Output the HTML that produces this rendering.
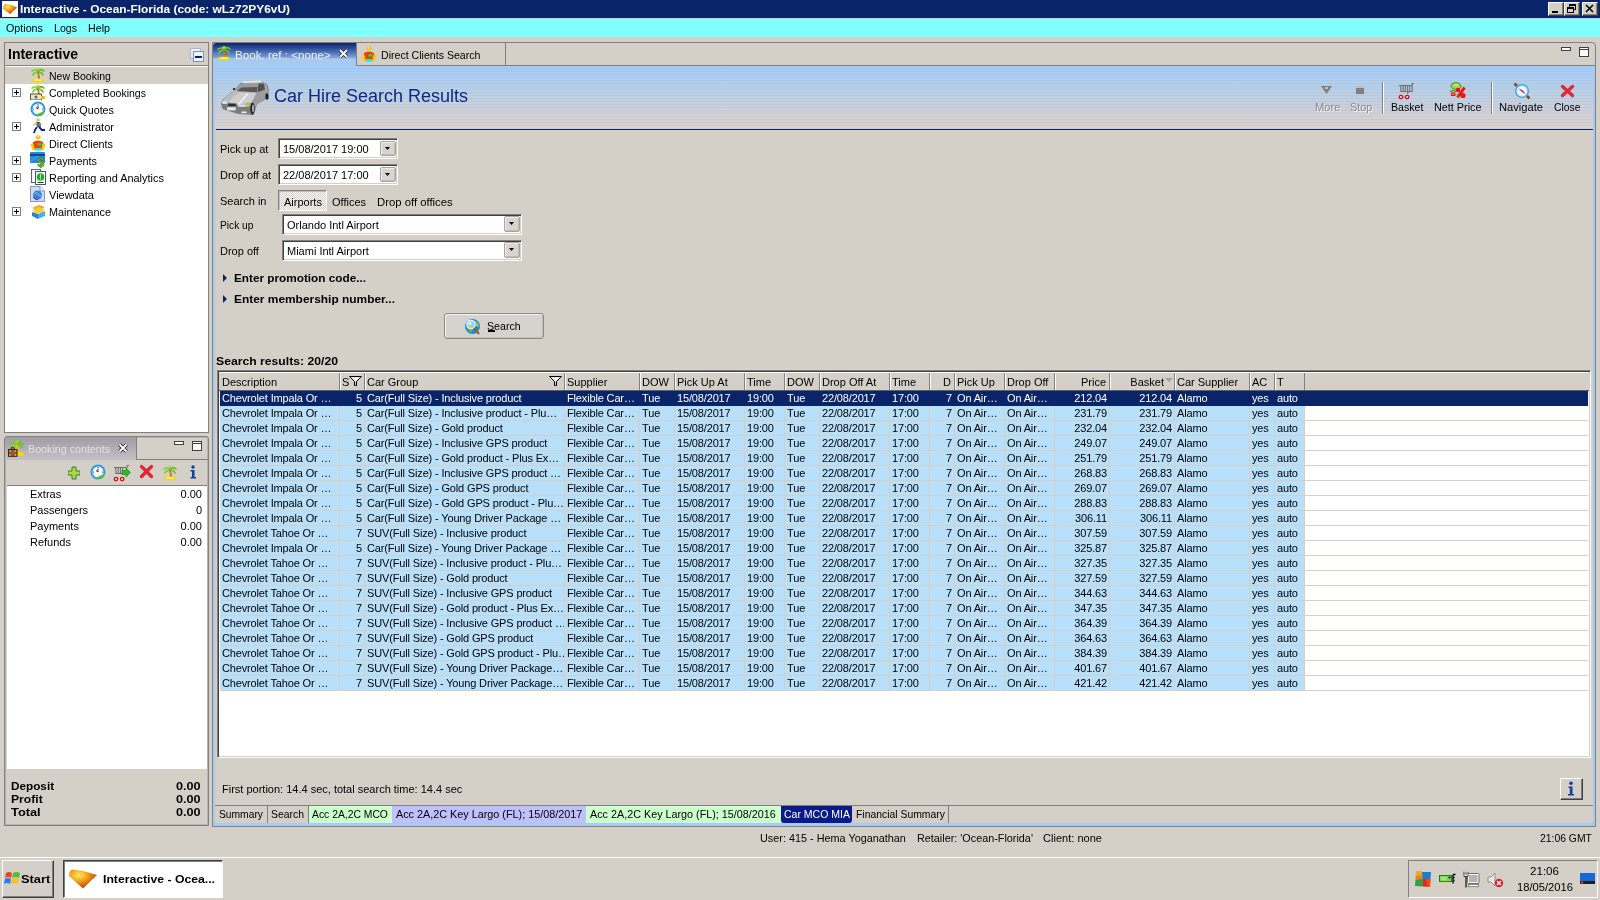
<!DOCTYPE html>
<html><head><meta charset="utf-8">
<style>
*{box-sizing:border-box;margin:0;padding:0}
html,body{width:1600px;height:900px;overflow:hidden}
body{will-change:transform;position:relative;background:#d4d0c8;font-family:"Liberation Sans",sans-serif;font-size:11px;color:#000}
.a{position:absolute}
.t{position:absolute;white-space:nowrap;line-height:13px}
</style></head><body>
<div class="a" style="left:0px;top:0px;width:1600px;height:18px;background:#0a246a"></div>
<div class="a" style="left:2px;top:1px;width:16px;height:16px;background:#fff"></div>
<svg class="a" style="left:2px;top:1px" width="16" height="16" viewBox="0 0 16 16"><defs><radialGradient id="og" cx="0.35" cy="0.3" r="0.75"><stop offset="0" stop-color="#ffe868"/><stop offset="0.35" stop-color="#f8b020"/><stop offset="0.75" stop-color="#d06010"/><stop offset="1" stop-color="#b04010"/></radialGradient></defs><path d="M1 7.8 Q1.5 4 3 3 L10 4.2 L15 6.6 L8.2 13 Z" fill="url(#og)"/></svg>
<div class="t" style="left:20px;top:3px;font-size:11px;line-height:13px;font-weight:bold;color:#fff;transform:scaleX(1.0824);transform-origin:0 0;">Interactive - Ocean-Florida (code: wLz72PY6vU)</div>
<div class="a" style="left:1548px;top:2px;width:16px;height:14px;background:#d4d0c8;border-top:1px solid #fff;border-left:1px solid #fff;border-right:1px solid #404040;border-bottom:1px solid #404040;box-shadow:inset -1px -1px 0 #808080;"></div>
<div class="a" style="left:1564px;top:2px;width:16px;height:14px;background:#d4d0c8;border-top:1px solid #fff;border-left:1px solid #fff;border-right:1px solid #404040;border-bottom:1px solid #404040;box-shadow:inset -1px -1px 0 #808080;"></div>
<div class="a" style="left:1582px;top:2px;width:16px;height:14px;background:#d4d0c8;border-top:1px solid #fff;border-left:1px solid #fff;border-right:1px solid #404040;border-bottom:1px solid #404040;box-shadow:inset -1px -1px 0 #808080;"></div>
<svg class="a" style="left:1548px;top:2px" width="16" height="14" viewBox="0 0 16 14"><rect x="4" y="9" width="6" height="2" fill="#000"/></svg>
<svg class="a" style="left:1564px;top:2px" width="16" height="14" viewBox="0 0 16 14"><rect x="5.5" y="2.5" width="6" height="5" fill="none" stroke="#000"/><rect x="5" y="2" width="7" height="2" fill="#000"/><rect x="3.5" y="5.5" width="6" height="5" fill="#d4d0c8" stroke="#000"/><rect x="3" y="5" width="7" height="2" fill="#000"/></svg>
<svg class="a" style="left:1582px;top:2px" width="16" height="14" viewBox="0 0 16 14"><path d="M4 3 L11 10 M11 3 L4 10" stroke="#000" stroke-width="1.6"/></svg>
<div class="a" style="left:0px;top:19px;width:1600px;height:18px;background:#80ffff"></div>
<div class="t" style="left:6px;top:22px;font-size:11px;line-height:13px;transform:scaleX(0.9746);transform-origin:0 0;">Options</div>
<div class="t" style="left:54px;top:22px;font-size:11px;line-height:13px;transform:scaleX(0.9617);transform-origin:0 0;">Logs</div>
<div class="t" style="left:88px;top:22px;font-size:11px;line-height:13px;transform:scaleX(0.9711);transform-origin:0 0;">Help</div>
<div class="a" style="left:4px;top:42px;width:205px;height:391px;background:#fff;border:1px solid #808080"></div>
<div class="a" style="left:5px;top:43px;width:203px;height:23px;background:#d4d0c8;border-bottom:1px solid #808080"></div>
<div class="t" style="left:8px;top:46px;font-size:14px;line-height:16px;font-weight:bold;">Interactive</div>
<svg class="a" style="left:190px;top:48px" width="14" height="14" viewBox="0 0 14 14"><rect x="0.5" y="0.5" width="10" height="10" fill="#e8f0f8" stroke="#a8b8d0"/><rect x="3.5" y="3.5" width="10" height="10" fill="#f0f4fa" stroke="#8090b0"/><rect x="5" y="8" width="7" height="2" fill="#0a246a"/></svg>
<div class="a" style="left:5px;top:67px;width:203px;height:17px;background:#d4d0c8"></div>
<div class="t" style="left:49px;top:70px;font-size:11px;line-height:13px;transform:scaleX(0.9555);transform-origin:0 0;">New Booking</div>
<div class="a" style="left:12px;top:88px;width:9px;height:9px;background:#fff;border:1px solid #808080"></div>
<div class="a" style="left:14px;top:92px;width:5px;height:1px;background:#000"></div>
<div class="a" style="left:16px;top:90px;width:1px;height:5px;background:#000"></div>
<div class="t" style="left:49px;top:87px;font-size:11px;line-height:13px;transform:scaleX(0.9546);transform-origin:0 0;">Completed Bookings</div>
<div class="t" style="left:49px;top:104px;font-size:11px;line-height:13px;transform:scaleX(0.9743);transform-origin:0 0;">Quick Quotes</div>
<div class="a" style="left:12px;top:122px;width:9px;height:9px;background:#fff;border:1px solid #808080"></div>
<div class="a" style="left:14px;top:126px;width:5px;height:1px;background:#000"></div>
<div class="a" style="left:16px;top:124px;width:1px;height:5px;background:#000"></div>
<div class="t" style="left:49px;top:121px;font-size:11px;line-height:13px;transform:scaleX(1.0029);transform-origin:0 0;">Administrator</div>
<div class="t" style="left:49px;top:138px;font-size:11px;line-height:13px;transform:scaleX(0.9782);transform-origin:0 0;">Direct Clients</div>
<div class="a" style="left:12px;top:156px;width:9px;height:9px;background:#fff;border:1px solid #808080"></div>
<div class="a" style="left:14px;top:160px;width:5px;height:1px;background:#000"></div>
<div class="a" style="left:16px;top:158px;width:1px;height:5px;background:#000"></div>
<div class="t" style="left:49px;top:155px;font-size:11px;line-height:13px;transform:scaleX(0.9804);transform-origin:0 0;">Payments</div>
<div class="a" style="left:12px;top:173px;width:9px;height:9px;background:#fff;border:1px solid #808080"></div>
<div class="a" style="left:14px;top:177px;width:5px;height:1px;background:#000"></div>
<div class="a" style="left:16px;top:175px;width:1px;height:5px;background:#000"></div>
<div class="t" style="left:49px;top:172px;font-size:11px;line-height:13px;transform:scaleX(0.9944);transform-origin:0 0;">Reporting and Analytics</div>
<div class="t" style="left:49px;top:189px;font-size:11px;line-height:13px;transform:scaleX(0.9982);transform-origin:0 0;">Viewdata</div>
<div class="a" style="left:12px;top:207px;width:9px;height:9px;background:#fff;border:1px solid #808080"></div>
<div class="a" style="left:14px;top:211px;width:5px;height:1px;background:#000"></div>
<div class="a" style="left:16px;top:209px;width:1px;height:5px;background:#000"></div>
<div class="t" style="left:49px;top:206px;font-size:11px;line-height:13px;transform:scaleX(0.9834);transform-origin:0 0;">Maintenance</div>
<svg class="a" style="left:30px;top:67px" width="16" height="16" viewBox="0 0 16 16"><path d="M8 3 Q4 1 1 4 L2 5 Q4 3 7 4 Q3 5 2 8 L3 9 Q5 6 8 5Z" fill="#78d028"/><path d="M8 3 Q12 0 15 4 L14 5 Q12 3 9 4 Q13 5 14 8 L13 9 Q11 6 8 5Z" fill="#68c020"/><path d="M6 2 Q8 0 10 2 L8 4Z" fill="#98e040"/><path d="M7.5 4 Q9 8 9 12" stroke="#d08018" stroke-width="1.8" fill="none"/><path d="M8 6 L9 7 M8.5 9 L9.5 10" stroke="#804010" stroke-width="0.8"/><ellipse cx="8" cy="13.5" rx="6.5" ry="1.8" fill="#f8d800"/><ellipse cx="8" cy="13" rx="4" ry="1" fill="#fff060"/></svg>
<svg class="a" style="left:30px;top:84px" width="16" height="16" viewBox="0 0 16 16"><path d="M8 3 Q4 1 1 4 L2 5 Q4 3 7 4 Q3 5 2 8 L3 9 Q5 6 8 5Z" fill="#78d028"/><path d="M8 3 Q12 0 15 4 L14 5 Q12 3 9 4 Q13 5 14 8 L13 9 Q11 6 8 5Z" fill="#68c020"/><path d="M6 2 Q8 0 10 2 L8 4Z" fill="#98e040"/><path d="M7.5 4 Q9 8 9 12" stroke="#d08018" stroke-width="1.8" fill="none"/><path d="M8 6 L9 7 M8.5 9 L9.5 10" stroke="#804010" stroke-width="0.8"/></svg>
<svg class="a" style="left:30px;top:84px" width="16" height="16" viewBox="0 0 16 16"><rect x="0.5" y="10" width="11" height="6" fill="#e8e8d0" stroke="#505040" stroke-width="1"/><circle cx="6" cy="13" r="1.6" fill="#706860"/><rect x="11" y="12" width="4" height="3" fill="#f0c000"/></svg>
<svg class="a" style="left:30px;top:101px" width="16" height="16" viewBox="0 0 16 16"><circle cx="8" cy="8" r="7.5" fill="#2898f0"/><circle cx="8" cy="8" r="5.5" fill="#fafafa"/><path d="M8 4.5 V8 L6 6.5" stroke="#303030" stroke-width="1" fill="none"/><circle cx="8" cy="3.5" r="0.6" fill="#303030"/><circle cx="12.5" cy="8" r="0.6" fill="#303030"/><circle cx="3.5" cy="8" r="0.6" fill="#303030"/><path d="M5 14 Q10 16 14 12 L15 9 L12 11Z" fill="#58c020"/></svg>
<svg class="a" style="left:30px;top:118px" width="16" height="16" viewBox="0 0 16 16"><circle cx="8" cy="2" r="1.8" fill="#f0c040"/><path d="M6 4 L10 4 L11 9 L7 9Z" fill="#4858b0"/><path d="M9 5 L11 5 L11 8 L9 8Z" fill="#60b030"/><path d="M7 5 L3 7" stroke="#f0b030" stroke-width="1.2"/><path d="M7 9 L5 12 L4 15 M9 9 L12 12 L15 12" stroke="#182080" stroke-width="1.8" fill="none"/></svg>
<svg class="a" style="left:30px;top:135px" width="16" height="16" viewBox="0 0 16 16"><ellipse cx="8" cy="2.2" rx="2.6" ry="2" fill="#f8c010"/><ellipse cx="7.5" cy="1.8" rx="1" ry="0.6" fill="#fff8c0"/><path d="M3 7 Q8 4 13 7 L14 12 L12 15 L4 15 L2 12 Z" fill="#ff3800"/><rect x="7.4" y="8" width="4" height="2.6" fill="#10e040"/><path d="M0.5 9 L3.5 8.5 L5 15 L2.5 15Z" fill="#f8d000"/><path d="M12.5 8.5 L15.5 9 L13.5 15 L11 15Z" fill="#f8c800"/><rect x="5" y="13" width="6" height="2.6" fill="#10f0f0"/></svg>
<svg class="a" style="left:30px;top:152px" width="16" height="16" viewBox="0 0 16 16"><rect x="0" y="0" width="15" height="11" rx="1" fill="#2888e0"/><rect x="0" y="2" width="15" height="2" fill="#104890"/><path d="M1 9 L8 4" stroke="#60b0f0" stroke-width="0.8"/><text x="7.5" y="14.5" font-size="12" font-weight="bold" fill="#80c820" stroke="#3a7010" stroke-width="0.5" font-family="Liberation Sans">$</text></svg>
<svg class="a" style="left:30px;top:169px" width="16" height="16" viewBox="0 0 16 16"><rect x="1.5" y="0.5" width="9" height="13" fill="#f8f8f8" stroke="#506878"/><rect x="5.5" y="2.5" width="10" height="13" fill="#fff" stroke="#405868"/><circle cx="10.5" cy="8" r="3.8" fill="#20b030"/><rect x="10" y="5.5" width="1" height="3" fill="#fff"/><rect x="10" y="9.5" width="1" height="1" fill="#fff"/><rect x="7.5" y="13" width="6" height="1" fill="#303030"/></svg>
<svg class="a" style="left:30px;top:186px" width="16" height="16" viewBox="0 0 16 16"><path d="M0.5 0.5 H10 L14.5 5 V15.5 H0.5Z" fill="#d0dcf0" stroke="#8898b8"/><path d="M10 0.5 V5 H14.5" fill="#f0f0f0" stroke="#8898b8"/><circle cx="7.5" cy="9" r="4.5" fill="#4878e8"/><path d="M4 8 Q6 6 8 8 Q10 11 12 9" stroke="#40c8d0" stroke-width="1.6" fill="none"/><path d="M3.5 11 Q5 14 8 13.5" stroke="#6030a0" stroke-width="1.2" fill="none"/></svg>
<svg class="a" style="left:30px;top:203px" width="16" height="16" viewBox="0 0 16 16"><path d="M2 5 L9 2 L15 4 L8 7Z" fill="#f8a020"/><path d="M2 7 L9 4 L15 6 L8 9Z" fill="#f8c830"/><path d="M2 9 L8 11 L8 16 L2 13Z" fill="#2880d8"/><path d="M8 11 L15 8 L15 13 L8 16Z" fill="#40b0f0"/><path d="M2 9 L9 6 L15 8 L8 11Z" fill="#f0d040"/></svg>
<div class="a" style="left:4px;top:436px;width:205px;height:390px;background:#d4d0c8;border:1px solid #808080;border-radius:3px 3px 0 0;box-shadow:inset 1px 1px 0 #b4b2b8, inset -1px -1px 0 #b4b2b8"></div>
<div class="a" style="left:5px;top:437px;width:131px;height:23px;background:linear-gradient(#a09ca4,#c4c0c8);border-radius:3px 0 0 0"></div>
<div class="a" style="left:136px;top:437px;width:1px;height:23px;background:#808080"></div>
<div class="a" style="left:136px;top:459px;width:72px;height:1px;background:#808080"></div>
<svg class="a" style="left:8px;top:440px" width="17" height="17" viewBox="0 0 17 17"><path d="M9 2 Q5 0 1 4 L2 5 Q5 3 8 4 Q4 5 3 8 L4 9 Q6 6 9 5Z" fill="#78d020"/><path d="M9 2 Q13 0 16 5 L15 6 Q13 3 10 4 Q14 5 15 8 L14 9 Q12 6 9 5Z" fill="#68c818"/><path d="M7 1 Q9 0 11 1 L9 4Z" fill="#90e030"/><path d="M8.5 5 Q9.5 9 9.5 13" stroke="#f0c000" stroke-width="2" fill="none"/><rect x="9.5" y="12" width="6" height="4" fill="#f8d800"/><rect x="0.5" y="9.5" width="8.5" height="6.8" fill="#8c5c40" stroke="#301808" stroke-width="0.9"/><path d="M3 9.5 V7.8 H6.2 V9.5" stroke="#402010" stroke-width="1" fill="none"/><rect x="1.2" y="10.2" width="1.4" height="1.4" fill="#f8d000"/><rect x="6.8" y="10.2" width="1.4" height="1.4" fill="#f8d000"/><rect x="1.2" y="14.4" width="1.4" height="1.4" fill="#f8d000"/><rect x="6.8" y="14.4" width="1.4" height="1.4" fill="#f8d000"/></svg>
<div class="t" style="left:28px;top:443px;font-size:11px;line-height:13px;color:#e4e0e0;transform:scaleX(0.9728);transform-origin:0 0;">Booking contents</div>
<svg class="a" style="left:118px;top:443px" width="10" height="10" viewBox="0 0 10 10"><path d="M1.5 1.5 L8.5 8.5 M8.5 1.5 L1.5 8.5" stroke="#202020" stroke-width="3.8"/><path d="M1.5 1.5 L8.5 8.5 M8.5 1.5 L1.5 8.5" stroke="#fff" stroke-width="2"/></svg>
<div class="a" style="left:174px;top:441px;width:10px;height:4px;background:#fff;border:1px solid #404040"></div>
<div class="a" style="left:192px;top:441px;width:10px;height:10px;background:#fff;border:1px solid #404040"></div>
<div class="a" style="left:193px;top:443px;width:8px;height:1px;background:#404040"></div>
<div class="a" style="left:7px;top:461px;width:200px;height:25px;background:#d4d0c8;border-bottom:1px solid #808080"></div>
<svg class="a" style="left:68px;top:466px" width="12" height="14" viewBox="0 0 12 14"><path d="M4 1 H8 V5 H12 V9 H8 V13 H4 V9 H0 V5 H4Z" fill="#b0d840" stroke="#308040"/></svg>
<svg class="a" style="left:90px;top:464px" width="16" height="16" viewBox="0 0 16 16"><circle cx="8" cy="8" r="7.5" fill="#2898f0"/><circle cx="8" cy="8" r="5.5" fill="#fafafa"/><path d="M8 4.5 V8 L6 6.5" stroke="#303030" stroke-width="1" fill="none"/><circle cx="8" cy="3.5" r="0.6" fill="#303030"/><circle cx="12.5" cy="8" r="0.6" fill="#303030"/><circle cx="3.5" cy="8" r="0.6" fill="#303030"/><path d="M5 14 Q10 16 14 12 L15 9 L12 11Z" fill="#58c020"/></svg>
<svg class="a" style="left:113px;top:464px" width="18" height="18" viewBox="0 0 18 18"><path d="M1 3.5 H14 M2.8 3.5 V9.5 H12 M5.2 3.5 V9.5 M7.4 3.5 V9.5 M9.6 3.5 V8 M14.2 3.5 V1.5 H16" stroke="#707070" stroke-width="1.1" fill="none"/><circle cx="3" cy="15" r="1.7" fill="#fff" stroke="#f00000" stroke-width="1.3"/><circle cx="9.2" cy="15" r="1.7" fill="#fff" stroke="#f00000" stroke-width="1.3"/><path d="M9 6.5 H13 V4 L17.5 8.5 L13 13 V10.5 H9Z" fill="#20c020" stroke="#108010" stroke-width="0.6"/></svg>
<svg class="a" style="left:139px;top:464px" width="15" height="15" viewBox="0 0 15 15"><path d="M2.5 2.5 L12.5 12.5 M12.5 2.5 L2.5 12.5" stroke="#e02838" stroke-width="3.4" stroke-linecap="round"/></svg>
<svg class="a" style="left:162px;top:465px" width="16" height="16" viewBox="0 0 16 16"><path d="M8 3 Q4 1 1 4 L2 5 Q4 3 7 4 Q3 5 2 8 L3 9 Q5 6 8 5Z" fill="#78d028"/><path d="M8 3 Q12 0 15 4 L14 5 Q12 3 9 4 Q13 5 14 8 L13 9 Q11 6 8 5Z" fill="#68c020"/><path d="M6 2 Q8 0 10 2 L8 4Z" fill="#98e040"/><path d="M7.5 4 Q9 8 9 12" stroke="#d08018" stroke-width="1.8" fill="none"/><path d="M8 6 L9 7 M8.5 9 L9.5 10" stroke="#804010" stroke-width="0.8"/><ellipse cx="8" cy="13.5" rx="6.5" ry="1.8" fill="#f8d800"/><ellipse cx="8" cy="13" rx="4" ry="1" fill="#fff060"/></svg>
<svg class="a" style="left:188px;top:465px" width="10" height="14" viewBox="0 0 10 14"><circle cx="5" cy="2" r="1.7" fill="#1040a0"/><path d="M2.5 5 H6.5 V12 H8 V13.5 H2.5 V12 H4 V6.5 H2.5Z" fill="#1040a0"/></svg>
<div class="a" style="left:7px;top:486px;width:200px;height:283px;background:#fff"></div>
<div class="t" style="left:30px;top:488px;font-size:11px;line-height:13px;">Extras</div>
<div class="t" style="left:120px;top:488px;font-size:11px;line-height:13px;width:82px;overflow:hidden;text-align:right;">0.00</div>
<div class="t" style="left:30px;top:504px;font-size:11px;line-height:13px;">Passengers</div>
<div class="t" style="left:120px;top:504px;font-size:11px;line-height:13px;width:82px;overflow:hidden;text-align:right;">0</div>
<div class="t" style="left:30px;top:520px;font-size:11px;line-height:13px;">Payments</div>
<div class="t" style="left:120px;top:520px;font-size:11px;line-height:13px;width:82px;overflow:hidden;text-align:right;">0.00</div>
<div class="t" style="left:30px;top:536px;font-size:11px;line-height:13px;">Refunds</div>
<div class="t" style="left:120px;top:536px;font-size:11px;line-height:13px;width:82px;overflow:hidden;text-align:right;">0.00</div>
<div class="t" style="left:11px;top:780px;font-size:11px;line-height:13px;font-weight:bold;transform:scaleX(1.0675);transform-origin:0 0;">Deposit</div>
<div class="t" style="left:176px;top:780px;font-size:11px;line-height:13px;font-weight:bold;transform:scaleX(1.1498);transform-origin:0 0;">0.00</div>
<div class="t" style="left:11px;top:793px;font-size:11px;line-height:13px;font-weight:bold;transform:scaleX(1.1039);transform-origin:0 0;">Profit</div>
<div class="t" style="left:176px;top:793px;font-size:11px;line-height:13px;font-weight:bold;transform:scaleX(1.1498);transform-origin:0 0;">0.00</div>
<div class="t" style="left:11px;top:806px;font-size:11px;line-height:13px;font-weight:bold;transform:scaleX(1.1648);transform-origin:0 0;">Total</div>
<div class="t" style="left:176px;top:806px;font-size:11px;line-height:13px;font-weight:bold;transform:scaleX(1.1498);transform-origin:0 0;">0.00</div>
<div class="a" style="left:212px;top:42px;width:1384px;height:785px;background:#d4d0c8;border:1px solid #808080;border-radius:0 4px 0 0"></div>
<div class="a" style="left:213px;top:66px;width:1382px;height:760px;border-left:2px solid #a6caf0;border-right:2px solid #a6caf0;border-bottom:3px solid #a6caf0"></div>
<div class="a" style="left:213px;top:65px;width:1382px;height:1px;background:#808080"></div>
<div class="a" style="left:213px;top:43px;width:143px;height:23px;background:linear-gradient(#0a246a 0px,#3a5ca8 7px,#7a9cd8 14px,#a6caf0 16px,#a6caf0);border-radius:3px 0 0 0"></div>
<svg class="a" style="left:216px;top:45px" width="16" height="16" viewBox="0 0 16 16"><path d="M8 3 Q4 1 1 4 L2 5 Q4 3 7 4 Q3 5 2 8 L3 9 Q5 6 8 5Z" fill="#78d028"/><path d="M8 3 Q12 0 15 4 L14 5 Q12 3 9 4 Q13 5 14 8 L13 9 Q11 6 8 5Z" fill="#68c020"/><path d="M6 2 Q8 0 10 2 L8 4Z" fill="#98e040"/><path d="M7.5 4 Q9 8 9 12" stroke="#d08018" stroke-width="1.8" fill="none"/><path d="M8 6 L9 7 M8.5 9 L9.5 10" stroke="#804010" stroke-width="0.8"/><ellipse cx="8" cy="13.5" rx="6.5" ry="1.8" fill="#f8d800"/><ellipse cx="8" cy="13" rx="4" ry="1" fill="#fff060"/></svg>
<div class="t" style="left:235px;top:49px;font-size:11px;line-height:13px;color:#f0f4ff;transform:scaleX(1.0570);transform-origin:0 0;">Book. ref.: &lt;none&gt;</div>
<svg class="a" style="left:338px;top:48px" width="11" height="11" viewBox="0 0 11 11"><path d="M2 2 L9 9 M9 2 L2 9" stroke="#303040" stroke-width="3.4"/><path d="M2 2 L9 9 M9 2 L2 9" stroke="#fff" stroke-width="1.8"/></svg>
<div class="a" style="left:356px;top:43px;width:1px;height:23px;background:#808080"></div>
<div class="a" style="left:505px;top:43px;width:1px;height:23px;background:#808080"></div>
<svg class="a" style="left:361px;top:46px" width="16" height="16" viewBox="0 0 16 16"><ellipse cx="8" cy="2.2" rx="2.6" ry="2" fill="#f8c010"/><ellipse cx="7.5" cy="1.8" rx="1" ry="0.6" fill="#fff8c0"/><path d="M3 7 Q8 4 13 7 L14 12 L12 15 L4 15 L2 12 Z" fill="#ff3800"/><rect x="7.4" y="8" width="4" height="2.6" fill="#10e040"/><path d="M0.5 9 L3.5 8.5 L5 15 L2.5 15Z" fill="#f8d000"/><path d="M12.5 8.5 L15.5 9 L13.5 15 L11 15Z" fill="#f8c800"/><rect x="5" y="13" width="6" height="2.6" fill="#10f0f0"/></svg>
<div class="t" style="left:381px;top:49px;font-size:11px;line-height:13px;transform:scaleX(0.9624);transform-origin:0 0;">Direct Clients Search</div>
<div class="a" style="left:1561px;top:47px;width:10px;height:4px;background:#fff;border:1px solid #404040"></div>
<div class="a" style="left:1579px;top:47px;width:10px;height:10px;background:#fff;border:1px solid #404040"></div>
<div class="a" style="left:1580px;top:49px;width:8px;height:1px;background:#404040"></div>
<div class="a" style="left:215px;top:66px;width:1378px;height:63px;background:repeating-linear-gradient(rgba(255,255,255,0.0) 0px,rgba(255,255,255,0) 2px,rgba(0,0,0,0.03) 2px,rgba(0,0,0,0.03) 3px),linear-gradient(#a4ccf8,#bcd0e4 45%,#d0d0d8 75%,#d8d4cc)"></div>
<div class="a" style="left:216px;top:129px;width:1377px;height:1px;background:#0a246a"></div>
<svg class="a" style="left:221px;top:80px" width="49" height="36" viewBox="0 0 49 36"><path d="M0.3 23.5 L1.9 19.7 L14 10 L20 3 L40 1.5 L46 4.8 L47.5 9.6 L46 18 L35.5 24 L32.3 34.7 L17.3 33.6 L1.9 28.8Z" fill="#a8a8a8" stroke="#606060" stroke-width="0.6"/><path d="M14.7 10.1 L20.5 3.7 L37.6 3.2 L36 12.8Z" fill="#9a9a9a"/><path d="M20.5 7.5 L36.5 7 L36 12.3 L16 11Z" fill="#585858"/><path d="M37.6 3.2 L43 3.7 L44 9.6 L36.5 12.8Z" fill="#505050"/><path d="M22 1.2 L40 0.6 L41 2.5 L21 3Z" fill="#e8e8e8"/><path d="M7.2 21.9 L17.3 12.3 L35.5 12.8 L31.2 21.9 L17.3 25Z" fill="#cfcfcf"/><path d="M17.9 24 L27 13.3" stroke="#f4f4f4" stroke-width="1.4"/><path d="M1.9 19.7 L14 10 L17.3 12.3 L7.2 21.9Z" fill="#bdbdbd"/><path d="M35.5 12.8 L44 9.6 L46 18 L35.5 24 L31.2 21.9Z" fill="#9c9c9c"/><path d="M0.3 23.5 L17.3 25.6 L29 26.1 L32.3 33.6 L17.3 33.6 L1.9 28.8Z" fill="#7c7c7c"/><rect x="1.3" y="20.8" width="4.8" height="3" fill="#c8e8f8"/><rect x="17.3" y="24.6" width="7.5" height="2.2" fill="#c8e8f8"/><rect x="25.3" y="24.6" width="2.6" height="2.2" fill="#f0d000"/><rect x="7.2" y="23.5" width="8" height="2.6" fill="#303030"/><rect x="6.1" y="27.2" width="8.6" height="3.2" fill="#e8e8e8"/><rect x="20.5" y="31.5" width="5" height="1.6" fill="#f0f0f0"/><ellipse cx="31.5" cy="28.5" rx="2.2" ry="6" fill="#202020"/><ellipse cx="32" cy="28.5" rx="1" ry="4" fill="#b0b0b0"/><ellipse cx="46" cy="16.5" rx="1.6" ry="3.2" fill="#202020"/><rect x="12" y="8" width="2" height="2" fill="#303030"/></svg>
<div class="t" style="left:274px;top:86px;font-size:18px;line-height:20px;color:#0a2a84;">Car Hire Search Results</div>
<div class="t" style="left:1315px;top:101px;font-size:11px;line-height:13px;color:#8a8a8a;transform:scaleX(1.0140);transform-origin:0 0;text-shadow:1px 1px 0 #f4f4f4">More</div>
<svg class="a" style="left:1321px;top:86px" width="12" height="9" viewBox="0 0 12 9"><path d="M0 0 H11 L5.5 8Z" fill="#808080"/><rect x="4" y="1" width="3" height="2" fill="#c0c0c0"/></svg>
<div class="t" style="left:1350px;top:101px;font-size:11px;line-height:13px;color:#8a8a8a;transform:scaleX(0.9835);transform-origin:0 0;text-shadow:1px 1px 0 #f4f4f4">Stop</div>
<div class="a" style="left:1356px;top:86px;width:8px;height:8px;background:#808080;border-top:2px solid #c0c0c0"></div>
<div class="a" style="left:1382px;top:82px;width:1px;height:32px;background:#808080;box-shadow:1px 0 0 #fff"></div>
<div class="t" style="left:1391px;top:101px;font-size:11px;line-height:13px;transform:scaleX(0.9615);transform-origin:0 0;">Basket</div>
<svg class="a" style="left:1398px;top:82px" width="18" height="18" viewBox="0 0 18 18"><path d="M1 3.5 H14 M2.8 3.5 V9.5 H14.2 V1.5 H16 M5.2 3.5 V9.5 M7.4 3.5 V9.5 M9.6 3.5 V9.5 M11.8 3.5 V9.5 M10.5 9.5 L9.3 12" stroke="#707070" stroke-width="1.1" fill="none"/><circle cx="3" cy="15" r="1.7" fill="#d8f4f4" stroke="#f00000" stroke-width="1.3"/><circle cx="9.2" cy="15" r="1.7" fill="#d8f4f4" stroke="#f00000" stroke-width="1.3"/><path d="M4.7 15 H7.5" stroke="#508080" stroke-width="0.8"/></svg>
<div class="t" style="left:1434px;top:101px;font-size:11px;line-height:13px;transform:scaleX(0.9828);transform-origin:0 0;">Nett Price</div>
<svg class="a" style="left:1449px;top:82px" width="18" height="17" viewBox="0 0 18 17"><ellipse cx="7" cy="4" rx="5" ry="3.3" fill="#a8d060" stroke="#58a020" stroke-width="1.2"/><path d="M5 3 Q7 2 9 3" stroke="#e0f0c0" fill="none"/><path d="M1 9.5 Q4 8 7 9.5" stroke="#58a020" stroke-width="1.4" fill="none"/><rect x="2" y="10.5" width="4.5" height="3.5" fill="#f01010"/><rect x="3" y="11.7" width="2.5" height="1" fill="#ffb0b0"/><circle cx="9" cy="8" r="2.3" fill="#f01010"/><circle cx="14" cy="13.5" r="2.6" fill="#f01010"/><path d="M15.5 5.5 L8.5 15.5" stroke="#f01010" stroke-width="3"/><path d="M8 12 L10 15" stroke="#58a020" stroke-width="1.2"/></svg>
<div class="a" style="left:1491px;top:82px;width:1px;height:32px;background:#808080;box-shadow:1px 0 0 #fff"></div>
<div class="t" style="left:1499px;top:101px;font-size:11px;line-height:13px;transform:scaleX(1.0133);transform-origin:0 0;">Navigate</div>
<svg class="a" style="left:1513px;top:82px" width="18" height="18" viewBox="0 0 18 18"><circle cx="9" cy="9" r="6.3" fill="#eef6fa" stroke="#48a8e0" stroke-width="1.6"/><circle cx="9" cy="9" r="4.8" fill="none" stroke="#c8e0f0" stroke-width="0.6"/><path d="M5.4 6.2 L9.8 8.2 L8.2 9.8Z" fill="#2878e0"/><path d="M12.6 11.9 L9.8 8.2 L8.2 9.8Z" fill="#f02020"/><path d="M1.5 1.5 L4 4 M14 14 L16.5 16.5" stroke="#805018" stroke-width="2.6"/></svg>
<div class="t" style="left:1554px;top:101px;font-size:11px;line-height:13px;transform:scaleX(0.9401);transform-origin:0 0;">Close</div>
<svg class="a" style="left:1560px;top:84px" width="15" height="14" viewBox="0 0 15 14"><path d="M2.5 2.5 L12.5 11.5 M12.5 2.5 L2.5 11.5" stroke="#e02838" stroke-width="3.4" stroke-linecap="round"/></svg>
<div class="t" style="left:220px;top:143px;font-size:11px;line-height:13px;">Pick up at</div>
<div class="a" style="left:278px;top:138px;width:120px;height:21px;background:#fff;border-top:1px solid #808080;border-left:1px solid #808080;border-right:1px solid #fff;border-bottom:1px solid #fff;box-shadow:inset 1px 1px 0 #404040, inset -1px -1px 0 #d4d0c8;"></div>
<div class="t" style="left:283px;top:143px;font-size:11px;line-height:13px;">15/08/2017 19:00</div>
<div class="a" style="left:380px;top:141px;width:16px;height:15px;background:#d8d4d0;border:1px solid #a8a49e;border-radius:2px;box-shadow:inset 1px 1px 0 #f0eeea, inset -1px -1px 0 #c0bcb6"></div>
<svg class="a" style="left:385px;top:147px" width="5" height="3" viewBox="0 0 5 3"><path d="M0 0 H5 L2.5 3Z" fill="#000"/></svg>
<div class="t" style="left:220px;top:169px;font-size:11px;line-height:13px;">Drop off at</div>
<div class="a" style="left:278px;top:164px;width:120px;height:21px;background:#fff;border-top:1px solid #808080;border-left:1px solid #808080;border-right:1px solid #fff;border-bottom:1px solid #fff;box-shadow:inset 1px 1px 0 #404040, inset -1px -1px 0 #d4d0c8;"></div>
<div class="t" style="left:283px;top:169px;font-size:11px;line-height:13px;">22/08/2017 17:00</div>
<div class="a" style="left:380px;top:167px;width:16px;height:15px;background:#d8d4d0;border:1px solid #a8a49e;border-radius:2px;box-shadow:inset 1px 1px 0 #f0eeea, inset -1px -1px 0 #c0bcb6"></div>
<svg class="a" style="left:385px;top:173px" width="5" height="3" viewBox="0 0 5 3"><path d="M0 0 H5 L2.5 3Z" fill="#000"/></svg>
<div class="t" style="left:220px;top:195px;font-size:11px;line-height:13px;">Search in</div>
<div class="a" style="left:278px;top:190px;width:49px;height:21px;background-image:conic-gradient(#fafafa 25%,#d4d0c8 0 50%,#fafafa 0 75%,#d4d0c8 0);background-size:2px 2px;border-top:1px solid #808080;border-left:1px solid #808080;border-right:1px solid #fff;border-bottom:1px solid #fff;box-shadow:inset 1px 1px 0 #c0c0c0"></div>
<div class="t" style="left:284px;top:196px;font-size:11px;line-height:13px;">Airports</div>
<div class="t" style="left:332px;top:196px;font-size:11px;line-height:13px;">Offices</div>
<div class="t" style="left:377px;top:196px;font-size:11px;line-height:13px;transform:scaleX(1.0293);transform-origin:0 0;">Drop off offices</div>
<div class="t" style="left:220px;top:219px;font-size:11px;line-height:13px;transform:scaleX(0.9261);transform-origin:0 0;">Pick up</div>
<div class="a" style="left:282px;top:214px;width:240px;height:21px;background:#fff;border-top:1px solid #808080;border-left:1px solid #808080;border-right:1px solid #fff;border-bottom:1px solid #fff;box-shadow:inset 1px 1px 0 #404040, inset -1px -1px 0 #d4d0c8;"></div>
<div class="t" style="left:287px;top:219px;font-size:11px;line-height:13px;">Orlando Intl Airport</div>
<div class="a" style="left:504px;top:216px;width:16px;height:16px;background:#d8d4d0;border:1px solid #a8a49e;border-radius:2px;box-shadow:inset 1px 1px 0 #f0eeea, inset -1px -1px 0 #c0bcb6"></div>
<svg class="a" style="left:509px;top:222px" width="5" height="3" viewBox="0 0 5 3"><path d="M0 0 H5 L2.5 3Z" fill="#000"/></svg>
<div class="t" style="left:220px;top:245px;font-size:11px;line-height:13px;">Drop off</div>
<div class="a" style="left:282px;top:240px;width:240px;height:21px;background:#fff;border-top:1px solid #808080;border-left:1px solid #808080;border-right:1px solid #fff;border-bottom:1px solid #fff;box-shadow:inset 1px 1px 0 #404040, inset -1px -1px 0 #d4d0c8;"></div>
<div class="t" style="left:287px;top:245px;font-size:11px;line-height:13px;">Miami Intl Airport</div>
<div class="a" style="left:504px;top:242px;width:16px;height:16px;background:#d8d4d0;border:1px solid #a8a49e;border-radius:2px;box-shadow:inset 1px 1px 0 #f0eeea, inset -1px -1px 0 #c0bcb6"></div>
<svg class="a" style="left:509px;top:248px" width="5" height="3" viewBox="0 0 5 3"><path d="M0 0 H5 L2.5 3Z" fill="#000"/></svg>
<svg class="a" style="left:222px;top:273px" width="6" height="10" viewBox="0 0 6 10"><path d="M1 1 L5 5 L1 9Z" fill="#0a246a"/></svg>
<div class="t" style="left:234px;top:272px;font-size:11px;line-height:13px;font-weight:bold;transform:scaleX(1.0694);transform-origin:0 0;">Enter promotion code...</div>
<svg class="a" style="left:222px;top:294px" width="6" height="10" viewBox="0 0 6 10"><path d="M1 1 L5 5 L1 9Z" fill="#0a246a"/></svg>
<div class="t" style="left:234px;top:293px;font-size:11px;line-height:13px;font-weight:bold;transform:scaleX(1.0839);transform-origin:0 0;">Enter membership number...</div>
<div class="a" style="left:444px;top:313px;width:100px;height:26px;background:#d6d2ce;border:1px solid #8c8a86;border-radius:3px;box-shadow:inset 1px 1px 0 #f4f2f0, inset -1px -1px 0 #c4c0bc"></div>
<svg class="a" style="left:464px;top:318px" width="18" height="18" viewBox="0 0 18 18"><circle cx="8.5" cy="8.5" r="7.5" fill="#1a8ae8"/><path d="M2 7 Q5 5 8 8 Q10 12 7 15 Q4 13 3 10Z" fill="#58b828"/><path d="M11 3 Q15 5 15 9 L12 8Z" fill="#98d030"/><circle cx="7" cy="6.5" r="4.2" fill="#9ad0e8" stroke="#f0f0f0" stroke-width="1.3"/><circle cx="6" cy="5.5" r="1.5" fill="#e0f4ff"/><path d="M10 10 L15 16" stroke="#a85818" stroke-width="2"/></svg>
<div class="t" style="left:487px;top:320px;font-size:11px;line-height:13px;transform:scaleX(0.9668);transform-origin:0 0;">Search</div>
<div class="a" style="left:488px;top:330px;width:7px;height:2px;background:#000"></div>
<div class="t" style="left:216px;top:355px;font-size:11px;line-height:13px;font-weight:bold;transform:scaleX(1.1085);transform-origin:0 0;">Search results: 20/20</div>
<div class="a" style="left:217px;top:370px;width:1374px;height:388px;background:#fff;border-top:1px solid #808080;border-left:1px solid #808080;border-right:1px solid #fff;border-bottom:1px solid #fff;box-shadow:inset 1px 1px 0 #404040, inset -1px -1px 0 #d4d0c8"></div>
<div class="a" style="left:219px;top:372px;width:1370px;height:19px;background:#d4d0c8;border-top:1px solid #fff;border-bottom:1px solid #606060"></div>
<div class="a" style="left:339px;top:373px;width:1px;height:17px;background:#808080"></div>
<div class="a" style="left:340px;top:373px;width:1px;height:17px;background:#fff"></div>
<div class="a" style="left:364px;top:373px;width:1px;height:17px;background:#808080"></div>
<div class="a" style="left:365px;top:373px;width:1px;height:17px;background:#fff"></div>
<div class="a" style="left:564px;top:373px;width:1px;height:17px;background:#808080"></div>
<div class="a" style="left:565px;top:373px;width:1px;height:17px;background:#fff"></div>
<div class="a" style="left:639px;top:373px;width:1px;height:17px;background:#808080"></div>
<div class="a" style="left:640px;top:373px;width:1px;height:17px;background:#fff"></div>
<div class="a" style="left:674px;top:373px;width:1px;height:17px;background:#808080"></div>
<div class="a" style="left:675px;top:373px;width:1px;height:17px;background:#fff"></div>
<div class="a" style="left:744px;top:373px;width:1px;height:17px;background:#808080"></div>
<div class="a" style="left:745px;top:373px;width:1px;height:17px;background:#fff"></div>
<div class="a" style="left:784px;top:373px;width:1px;height:17px;background:#808080"></div>
<div class="a" style="left:785px;top:373px;width:1px;height:17px;background:#fff"></div>
<div class="a" style="left:819px;top:373px;width:1px;height:17px;background:#808080"></div>
<div class="a" style="left:820px;top:373px;width:1px;height:17px;background:#fff"></div>
<div class="a" style="left:889px;top:373px;width:1px;height:17px;background:#808080"></div>
<div class="a" style="left:890px;top:373px;width:1px;height:17px;background:#fff"></div>
<div class="a" style="left:929px;top:373px;width:1px;height:17px;background:#808080"></div>
<div class="a" style="left:930px;top:373px;width:1px;height:17px;background:#fff"></div>
<div class="a" style="left:954px;top:373px;width:1px;height:17px;background:#808080"></div>
<div class="a" style="left:955px;top:373px;width:1px;height:17px;background:#fff"></div>
<div class="a" style="left:1004px;top:373px;width:1px;height:17px;background:#808080"></div>
<div class="a" style="left:1005px;top:373px;width:1px;height:17px;background:#fff"></div>
<div class="a" style="left:1054px;top:373px;width:1px;height:17px;background:#808080"></div>
<div class="a" style="left:1055px;top:373px;width:1px;height:17px;background:#fff"></div>
<div class="a" style="left:1109px;top:373px;width:1px;height:17px;background:#808080"></div>
<div class="a" style="left:1110px;top:373px;width:1px;height:17px;background:#fff"></div>
<div class="a" style="left:1174px;top:373px;width:1px;height:17px;background:#808080"></div>
<div class="a" style="left:1175px;top:373px;width:1px;height:17px;background:#fff"></div>
<div class="a" style="left:1249px;top:373px;width:1px;height:17px;background:#808080"></div>
<div class="a" style="left:1250px;top:373px;width:1px;height:17px;background:#fff"></div>
<div class="a" style="left:1274px;top:373px;width:1px;height:17px;background:#808080"></div>
<div class="a" style="left:1275px;top:373px;width:1px;height:17px;background:#fff"></div>
<div class="a" style="left:1304px;top:373px;width:1px;height:17px;background:#808080"></div>
<div class="t" style="left:222px;top:376px;font-size:11px;line-height:13px;">Description</div>
<div class="t" style="left:342px;top:376px;font-size:11px;line-height:13px;">S</div>
<div class="t" style="left:367px;top:376px;font-size:11px;line-height:13px;">Car Group</div>
<div class="t" style="left:567px;top:376px;font-size:11px;line-height:13px;">Supplier</div>
<div class="t" style="left:642px;top:376px;font-size:11px;line-height:13px;">DOW</div>
<div class="t" style="left:677px;top:376px;font-size:11px;line-height:13px;">Pick Up At</div>
<div class="t" style="left:747px;top:376px;font-size:11px;line-height:13px;">Time</div>
<div class="t" style="left:787px;top:376px;font-size:11px;line-height:13px;">DOW</div>
<div class="t" style="left:822px;top:376px;font-size:11px;line-height:13px;">Drop Off At</div>
<div class="t" style="left:892px;top:376px;font-size:11px;line-height:13px;">Time</div>
<div class="t" style="left:930px;top:376px;font-size:11px;line-height:13px;width:21px;overflow:hidden;text-align:right;">D</div>
<div class="t" style="left:957px;top:376px;font-size:11px;line-height:13px;">Pick Up</div>
<div class="t" style="left:1007px;top:376px;font-size:11px;line-height:13px;">Drop Off</div>
<div class="t" style="left:1055px;top:376px;font-size:11px;line-height:13px;width:51px;overflow:hidden;text-align:right;">Price</div>
<div class="t" style="left:1110px;top:376px;font-size:11px;line-height:13px;width:54px;overflow:hidden;text-align:right;">Basket</div>
<div class="t" style="left:1177px;top:376px;font-size:11px;line-height:13px;">Car Supplier</div>
<div class="t" style="left:1252px;top:376px;font-size:11px;line-height:13px;">AC</div>
<div class="t" style="left:1277px;top:376px;font-size:11px;line-height:13px;">T</div>
<svg class="a" style="left:349px;top:376px" width="13" height="11" viewBox="0 0 13 11"><path d="M0.5 0.5 H12.5 L7.5 5.5 V9.5 L5.5 9.5 V5.5Z" fill="#c8d8f0" stroke="#000" stroke-width="1"/><path d="M2 1.5 H11 L7 5 H6Z" fill="#fff"/></svg>
<svg class="a" style="left:549px;top:376px" width="13" height="11" viewBox="0 0 13 11"><path d="M0.5 0.5 H12.5 L7.5 5.5 V9.5 L5.5 9.5 V5.5Z" fill="#c8d8f0" stroke="#000" stroke-width="1"/><path d="M2 1.5 H11 L7 5 H6Z" fill="#fff"/></svg>
<svg class="a" style="left:1165px;top:378px" width="8" height="5" viewBox="0 0 8 5"><path d="M0 0 H8 L4 4Z" fill="#a0a0a0"/></svg>
<div class="a" style="left:220px;top:391px;width:1084px;height:300px;background:#b9e0fb"></div>
<div class="a" style="left:220px;top:405px;width:1368px;height:1px;background:#d4d0c8"></div>
<div class="a" style="left:220px;top:420px;width:1368px;height:1px;background:#d4d0c8"></div>
<div class="a" style="left:220px;top:435px;width:1368px;height:1px;background:#d4d0c8"></div>
<div class="a" style="left:220px;top:450px;width:1368px;height:1px;background:#d4d0c8"></div>
<div class="a" style="left:220px;top:465px;width:1368px;height:1px;background:#d4d0c8"></div>
<div class="a" style="left:220px;top:480px;width:1368px;height:1px;background:#d4d0c8"></div>
<div class="a" style="left:220px;top:495px;width:1368px;height:1px;background:#d4d0c8"></div>
<div class="a" style="left:220px;top:510px;width:1368px;height:1px;background:#d4d0c8"></div>
<div class="a" style="left:220px;top:525px;width:1368px;height:1px;background:#d4d0c8"></div>
<div class="a" style="left:220px;top:540px;width:1368px;height:1px;background:#d4d0c8"></div>
<div class="a" style="left:220px;top:555px;width:1368px;height:1px;background:#d4d0c8"></div>
<div class="a" style="left:220px;top:570px;width:1368px;height:1px;background:#d4d0c8"></div>
<div class="a" style="left:220px;top:585px;width:1368px;height:1px;background:#d4d0c8"></div>
<div class="a" style="left:220px;top:600px;width:1368px;height:1px;background:#d4d0c8"></div>
<div class="a" style="left:220px;top:615px;width:1368px;height:1px;background:#d4d0c8"></div>
<div class="a" style="left:220px;top:630px;width:1368px;height:1px;background:#d4d0c8"></div>
<div class="a" style="left:220px;top:645px;width:1368px;height:1px;background:#d4d0c8"></div>
<div class="a" style="left:220px;top:660px;width:1368px;height:1px;background:#d4d0c8"></div>
<div class="a" style="left:220px;top:675px;width:1368px;height:1px;background:#d4d0c8"></div>
<div class="a" style="left:220px;top:690px;width:1368px;height:1px;background:#d4d0c8"></div>
<div class="a" style="left:339px;top:391px;width:1px;height:300px;background:#d4d0c8"></div>
<div class="a" style="left:364px;top:391px;width:1px;height:300px;background:#d4d0c8"></div>
<div class="a" style="left:564px;top:391px;width:1px;height:300px;background:#d4d0c8"></div>
<div class="a" style="left:639px;top:391px;width:1px;height:300px;background:#d4d0c8"></div>
<div class="a" style="left:674px;top:391px;width:1px;height:300px;background:#d4d0c8"></div>
<div class="a" style="left:744px;top:391px;width:1px;height:300px;background:#d4d0c8"></div>
<div class="a" style="left:784px;top:391px;width:1px;height:300px;background:#d4d0c8"></div>
<div class="a" style="left:819px;top:391px;width:1px;height:300px;background:#d4d0c8"></div>
<div class="a" style="left:889px;top:391px;width:1px;height:300px;background:#d4d0c8"></div>
<div class="a" style="left:929px;top:391px;width:1px;height:300px;background:#d4d0c8"></div>
<div class="a" style="left:954px;top:391px;width:1px;height:300px;background:#d4d0c8"></div>
<div class="a" style="left:1004px;top:391px;width:1px;height:300px;background:#d4d0c8"></div>
<div class="a" style="left:1054px;top:391px;width:1px;height:300px;background:#d4d0c8"></div>
<div class="a" style="left:1109px;top:391px;width:1px;height:300px;background:#d4d0c8"></div>
<div class="a" style="left:1174px;top:391px;width:1px;height:300px;background:#d4d0c8"></div>
<div class="a" style="left:1249px;top:391px;width:1px;height:300px;background:#d4d0c8"></div>
<div class="a" style="left:1274px;top:391px;width:1px;height:300px;background:#d4d0c8"></div>
<div class="a" style="left:1304px;top:391px;width:1px;height:300px;background:#d4d0c8"></div>
<div class="a" style="left:220px;top:391px;width:1368px;height:15px;background:#0a246a"></div>
<div style="letter-spacing:-0.15px">
<div class="t" style="left:222px;top:392px;font-size:11px;line-height:13px;color:#fff;width:117px;overflow:hidden;">Chevrolet Impala Or …</div>
<div class="t" style="left:340px;top:392px;font-size:11px;line-height:13px;color:#fff;width:22px;overflow:hidden;text-align:right;">5</div>
<div class="t" style="left:367px;top:392px;font-size:11px;line-height:13px;color:#fff;width:197px;overflow:hidden;">Car(Full Size) - Inclusive product</div>
<div class="t" style="left:567px;top:392px;font-size:11px;line-height:13px;color:#fff;width:72px;overflow:hidden;">Flexible Car…</div>
<div class="t" style="left:642px;top:392px;font-size:11px;line-height:13px;color:#fff;width:32px;overflow:hidden;">Tue</div>
<div class="t" style="left:677px;top:392px;font-size:11px;line-height:13px;color:#fff;width:67px;overflow:hidden;">15/08/2017</div>
<div class="t" style="left:747px;top:392px;font-size:11px;line-height:13px;color:#fff;width:37px;overflow:hidden;">19:00</div>
<div class="t" style="left:787px;top:392px;font-size:11px;line-height:13px;color:#fff;width:32px;overflow:hidden;">Tue</div>
<div class="t" style="left:822px;top:392px;font-size:11px;line-height:13px;color:#fff;width:67px;overflow:hidden;">22/08/2017</div>
<div class="t" style="left:892px;top:392px;font-size:11px;line-height:13px;color:#fff;width:37px;overflow:hidden;">17:00</div>
<div class="t" style="left:930px;top:392px;font-size:11px;line-height:13px;color:#fff;width:22px;overflow:hidden;text-align:right;">7</div>
<div class="t" style="left:957px;top:392px;font-size:11px;line-height:13px;color:#fff;width:47px;overflow:hidden;">On Air…</div>
<div class="t" style="left:1007px;top:392px;font-size:11px;line-height:13px;color:#fff;width:47px;overflow:hidden;">On Air…</div>
<div class="t" style="left:1055px;top:392px;font-size:11px;line-height:13px;color:#fff;width:52px;overflow:hidden;text-align:right;">212.04</div>
<div class="t" style="left:1110px;top:392px;font-size:11px;line-height:13px;color:#fff;width:62px;overflow:hidden;text-align:right;">212.04</div>
<div class="t" style="left:1177px;top:392px;font-size:11px;line-height:13px;color:#fff;width:72px;overflow:hidden;">Alamo</div>
<div class="t" style="left:1252px;top:392px;font-size:11px;line-height:13px;color:#fff;width:22px;overflow:hidden;">yes</div>
<div class="t" style="left:1277px;top:392px;font-size:11px;line-height:13px;color:#fff;width:27px;overflow:hidden;">auto</div>
<div class="t" style="left:222px;top:407px;font-size:11px;line-height:13px;width:117px;overflow:hidden;">Chevrolet Impala Or …</div>
<div class="t" style="left:340px;top:407px;font-size:11px;line-height:13px;width:22px;overflow:hidden;text-align:right;">5</div>
<div class="t" style="left:367px;top:407px;font-size:11px;line-height:13px;width:197px;overflow:hidden;">Car(Full Size) - Inclusive product - Plu…</div>
<div class="t" style="left:567px;top:407px;font-size:11px;line-height:13px;width:72px;overflow:hidden;">Flexible Car…</div>
<div class="t" style="left:642px;top:407px;font-size:11px;line-height:13px;width:32px;overflow:hidden;">Tue</div>
<div class="t" style="left:677px;top:407px;font-size:11px;line-height:13px;width:67px;overflow:hidden;">15/08/2017</div>
<div class="t" style="left:747px;top:407px;font-size:11px;line-height:13px;width:37px;overflow:hidden;">19:00</div>
<div class="t" style="left:787px;top:407px;font-size:11px;line-height:13px;width:32px;overflow:hidden;">Tue</div>
<div class="t" style="left:822px;top:407px;font-size:11px;line-height:13px;width:67px;overflow:hidden;">22/08/2017</div>
<div class="t" style="left:892px;top:407px;font-size:11px;line-height:13px;width:37px;overflow:hidden;">17:00</div>
<div class="t" style="left:930px;top:407px;font-size:11px;line-height:13px;width:22px;overflow:hidden;text-align:right;">7</div>
<div class="t" style="left:957px;top:407px;font-size:11px;line-height:13px;width:47px;overflow:hidden;">On Air…</div>
<div class="t" style="left:1007px;top:407px;font-size:11px;line-height:13px;width:47px;overflow:hidden;">On Air…</div>
<div class="t" style="left:1055px;top:407px;font-size:11px;line-height:13px;width:52px;overflow:hidden;text-align:right;">231.79</div>
<div class="t" style="left:1110px;top:407px;font-size:11px;line-height:13px;width:62px;overflow:hidden;text-align:right;">231.79</div>
<div class="t" style="left:1177px;top:407px;font-size:11px;line-height:13px;width:72px;overflow:hidden;">Alamo</div>
<div class="t" style="left:1252px;top:407px;font-size:11px;line-height:13px;width:22px;overflow:hidden;">yes</div>
<div class="t" style="left:1277px;top:407px;font-size:11px;line-height:13px;width:27px;overflow:hidden;">auto</div>
<div class="t" style="left:222px;top:422px;font-size:11px;line-height:13px;width:117px;overflow:hidden;">Chevrolet Impala Or …</div>
<div class="t" style="left:340px;top:422px;font-size:11px;line-height:13px;width:22px;overflow:hidden;text-align:right;">5</div>
<div class="t" style="left:367px;top:422px;font-size:11px;line-height:13px;width:197px;overflow:hidden;">Car(Full Size) - Gold product</div>
<div class="t" style="left:567px;top:422px;font-size:11px;line-height:13px;width:72px;overflow:hidden;">Flexible Car…</div>
<div class="t" style="left:642px;top:422px;font-size:11px;line-height:13px;width:32px;overflow:hidden;">Tue</div>
<div class="t" style="left:677px;top:422px;font-size:11px;line-height:13px;width:67px;overflow:hidden;">15/08/2017</div>
<div class="t" style="left:747px;top:422px;font-size:11px;line-height:13px;width:37px;overflow:hidden;">19:00</div>
<div class="t" style="left:787px;top:422px;font-size:11px;line-height:13px;width:32px;overflow:hidden;">Tue</div>
<div class="t" style="left:822px;top:422px;font-size:11px;line-height:13px;width:67px;overflow:hidden;">22/08/2017</div>
<div class="t" style="left:892px;top:422px;font-size:11px;line-height:13px;width:37px;overflow:hidden;">17:00</div>
<div class="t" style="left:930px;top:422px;font-size:11px;line-height:13px;width:22px;overflow:hidden;text-align:right;">7</div>
<div class="t" style="left:957px;top:422px;font-size:11px;line-height:13px;width:47px;overflow:hidden;">On Air…</div>
<div class="t" style="left:1007px;top:422px;font-size:11px;line-height:13px;width:47px;overflow:hidden;">On Air…</div>
<div class="t" style="left:1055px;top:422px;font-size:11px;line-height:13px;width:52px;overflow:hidden;text-align:right;">232.04</div>
<div class="t" style="left:1110px;top:422px;font-size:11px;line-height:13px;width:62px;overflow:hidden;text-align:right;">232.04</div>
<div class="t" style="left:1177px;top:422px;font-size:11px;line-height:13px;width:72px;overflow:hidden;">Alamo</div>
<div class="t" style="left:1252px;top:422px;font-size:11px;line-height:13px;width:22px;overflow:hidden;">yes</div>
<div class="t" style="left:1277px;top:422px;font-size:11px;line-height:13px;width:27px;overflow:hidden;">auto</div>
<div class="t" style="left:222px;top:437px;font-size:11px;line-height:13px;width:117px;overflow:hidden;">Chevrolet Impala Or …</div>
<div class="t" style="left:340px;top:437px;font-size:11px;line-height:13px;width:22px;overflow:hidden;text-align:right;">5</div>
<div class="t" style="left:367px;top:437px;font-size:11px;line-height:13px;width:197px;overflow:hidden;">Car(Full Size) - Inclusive GPS product</div>
<div class="t" style="left:567px;top:437px;font-size:11px;line-height:13px;width:72px;overflow:hidden;">Flexible Car…</div>
<div class="t" style="left:642px;top:437px;font-size:11px;line-height:13px;width:32px;overflow:hidden;">Tue</div>
<div class="t" style="left:677px;top:437px;font-size:11px;line-height:13px;width:67px;overflow:hidden;">15/08/2017</div>
<div class="t" style="left:747px;top:437px;font-size:11px;line-height:13px;width:37px;overflow:hidden;">19:00</div>
<div class="t" style="left:787px;top:437px;font-size:11px;line-height:13px;width:32px;overflow:hidden;">Tue</div>
<div class="t" style="left:822px;top:437px;font-size:11px;line-height:13px;width:67px;overflow:hidden;">22/08/2017</div>
<div class="t" style="left:892px;top:437px;font-size:11px;line-height:13px;width:37px;overflow:hidden;">17:00</div>
<div class="t" style="left:930px;top:437px;font-size:11px;line-height:13px;width:22px;overflow:hidden;text-align:right;">7</div>
<div class="t" style="left:957px;top:437px;font-size:11px;line-height:13px;width:47px;overflow:hidden;">On Air…</div>
<div class="t" style="left:1007px;top:437px;font-size:11px;line-height:13px;width:47px;overflow:hidden;">On Air…</div>
<div class="t" style="left:1055px;top:437px;font-size:11px;line-height:13px;width:52px;overflow:hidden;text-align:right;">249.07</div>
<div class="t" style="left:1110px;top:437px;font-size:11px;line-height:13px;width:62px;overflow:hidden;text-align:right;">249.07</div>
<div class="t" style="left:1177px;top:437px;font-size:11px;line-height:13px;width:72px;overflow:hidden;">Alamo</div>
<div class="t" style="left:1252px;top:437px;font-size:11px;line-height:13px;width:22px;overflow:hidden;">yes</div>
<div class="t" style="left:1277px;top:437px;font-size:11px;line-height:13px;width:27px;overflow:hidden;">auto</div>
<div class="t" style="left:222px;top:452px;font-size:11px;line-height:13px;width:117px;overflow:hidden;">Chevrolet Impala Or …</div>
<div class="t" style="left:340px;top:452px;font-size:11px;line-height:13px;width:22px;overflow:hidden;text-align:right;">5</div>
<div class="t" style="left:367px;top:452px;font-size:11px;line-height:13px;width:197px;overflow:hidden;">Car(Full Size) - Gold product - Plus Ex…</div>
<div class="t" style="left:567px;top:452px;font-size:11px;line-height:13px;width:72px;overflow:hidden;">Flexible Car…</div>
<div class="t" style="left:642px;top:452px;font-size:11px;line-height:13px;width:32px;overflow:hidden;">Tue</div>
<div class="t" style="left:677px;top:452px;font-size:11px;line-height:13px;width:67px;overflow:hidden;">15/08/2017</div>
<div class="t" style="left:747px;top:452px;font-size:11px;line-height:13px;width:37px;overflow:hidden;">19:00</div>
<div class="t" style="left:787px;top:452px;font-size:11px;line-height:13px;width:32px;overflow:hidden;">Tue</div>
<div class="t" style="left:822px;top:452px;font-size:11px;line-height:13px;width:67px;overflow:hidden;">22/08/2017</div>
<div class="t" style="left:892px;top:452px;font-size:11px;line-height:13px;width:37px;overflow:hidden;">17:00</div>
<div class="t" style="left:930px;top:452px;font-size:11px;line-height:13px;width:22px;overflow:hidden;text-align:right;">7</div>
<div class="t" style="left:957px;top:452px;font-size:11px;line-height:13px;width:47px;overflow:hidden;">On Air…</div>
<div class="t" style="left:1007px;top:452px;font-size:11px;line-height:13px;width:47px;overflow:hidden;">On Air…</div>
<div class="t" style="left:1055px;top:452px;font-size:11px;line-height:13px;width:52px;overflow:hidden;text-align:right;">251.79</div>
<div class="t" style="left:1110px;top:452px;font-size:11px;line-height:13px;width:62px;overflow:hidden;text-align:right;">251.79</div>
<div class="t" style="left:1177px;top:452px;font-size:11px;line-height:13px;width:72px;overflow:hidden;">Alamo</div>
<div class="t" style="left:1252px;top:452px;font-size:11px;line-height:13px;width:22px;overflow:hidden;">yes</div>
<div class="t" style="left:1277px;top:452px;font-size:11px;line-height:13px;width:27px;overflow:hidden;">auto</div>
<div class="t" style="left:222px;top:467px;font-size:11px;line-height:13px;width:117px;overflow:hidden;">Chevrolet Impala Or …</div>
<div class="t" style="left:340px;top:467px;font-size:11px;line-height:13px;width:22px;overflow:hidden;text-align:right;">5</div>
<div class="t" style="left:367px;top:467px;font-size:11px;line-height:13px;width:197px;overflow:hidden;">Car(Full Size) - Inclusive GPS product …</div>
<div class="t" style="left:567px;top:467px;font-size:11px;line-height:13px;width:72px;overflow:hidden;">Flexible Car…</div>
<div class="t" style="left:642px;top:467px;font-size:11px;line-height:13px;width:32px;overflow:hidden;">Tue</div>
<div class="t" style="left:677px;top:467px;font-size:11px;line-height:13px;width:67px;overflow:hidden;">15/08/2017</div>
<div class="t" style="left:747px;top:467px;font-size:11px;line-height:13px;width:37px;overflow:hidden;">19:00</div>
<div class="t" style="left:787px;top:467px;font-size:11px;line-height:13px;width:32px;overflow:hidden;">Tue</div>
<div class="t" style="left:822px;top:467px;font-size:11px;line-height:13px;width:67px;overflow:hidden;">22/08/2017</div>
<div class="t" style="left:892px;top:467px;font-size:11px;line-height:13px;width:37px;overflow:hidden;">17:00</div>
<div class="t" style="left:930px;top:467px;font-size:11px;line-height:13px;width:22px;overflow:hidden;text-align:right;">7</div>
<div class="t" style="left:957px;top:467px;font-size:11px;line-height:13px;width:47px;overflow:hidden;">On Air…</div>
<div class="t" style="left:1007px;top:467px;font-size:11px;line-height:13px;width:47px;overflow:hidden;">On Air…</div>
<div class="t" style="left:1055px;top:467px;font-size:11px;line-height:13px;width:52px;overflow:hidden;text-align:right;">268.83</div>
<div class="t" style="left:1110px;top:467px;font-size:11px;line-height:13px;width:62px;overflow:hidden;text-align:right;">268.83</div>
<div class="t" style="left:1177px;top:467px;font-size:11px;line-height:13px;width:72px;overflow:hidden;">Alamo</div>
<div class="t" style="left:1252px;top:467px;font-size:11px;line-height:13px;width:22px;overflow:hidden;">yes</div>
<div class="t" style="left:1277px;top:467px;font-size:11px;line-height:13px;width:27px;overflow:hidden;">auto</div>
<div class="t" style="left:222px;top:482px;font-size:11px;line-height:13px;width:117px;overflow:hidden;">Chevrolet Impala Or …</div>
<div class="t" style="left:340px;top:482px;font-size:11px;line-height:13px;width:22px;overflow:hidden;text-align:right;">5</div>
<div class="t" style="left:367px;top:482px;font-size:11px;line-height:13px;width:197px;overflow:hidden;">Car(Full Size) - Gold GPS product</div>
<div class="t" style="left:567px;top:482px;font-size:11px;line-height:13px;width:72px;overflow:hidden;">Flexible Car…</div>
<div class="t" style="left:642px;top:482px;font-size:11px;line-height:13px;width:32px;overflow:hidden;">Tue</div>
<div class="t" style="left:677px;top:482px;font-size:11px;line-height:13px;width:67px;overflow:hidden;">15/08/2017</div>
<div class="t" style="left:747px;top:482px;font-size:11px;line-height:13px;width:37px;overflow:hidden;">19:00</div>
<div class="t" style="left:787px;top:482px;font-size:11px;line-height:13px;width:32px;overflow:hidden;">Tue</div>
<div class="t" style="left:822px;top:482px;font-size:11px;line-height:13px;width:67px;overflow:hidden;">22/08/2017</div>
<div class="t" style="left:892px;top:482px;font-size:11px;line-height:13px;width:37px;overflow:hidden;">17:00</div>
<div class="t" style="left:930px;top:482px;font-size:11px;line-height:13px;width:22px;overflow:hidden;text-align:right;">7</div>
<div class="t" style="left:957px;top:482px;font-size:11px;line-height:13px;width:47px;overflow:hidden;">On Air…</div>
<div class="t" style="left:1007px;top:482px;font-size:11px;line-height:13px;width:47px;overflow:hidden;">On Air…</div>
<div class="t" style="left:1055px;top:482px;font-size:11px;line-height:13px;width:52px;overflow:hidden;text-align:right;">269.07</div>
<div class="t" style="left:1110px;top:482px;font-size:11px;line-height:13px;width:62px;overflow:hidden;text-align:right;">269.07</div>
<div class="t" style="left:1177px;top:482px;font-size:11px;line-height:13px;width:72px;overflow:hidden;">Alamo</div>
<div class="t" style="left:1252px;top:482px;font-size:11px;line-height:13px;width:22px;overflow:hidden;">yes</div>
<div class="t" style="left:1277px;top:482px;font-size:11px;line-height:13px;width:27px;overflow:hidden;">auto</div>
<div class="t" style="left:222px;top:497px;font-size:11px;line-height:13px;width:117px;overflow:hidden;">Chevrolet Impala Or …</div>
<div class="t" style="left:340px;top:497px;font-size:11px;line-height:13px;width:22px;overflow:hidden;text-align:right;">5</div>
<div class="t" style="left:367px;top:497px;font-size:11px;line-height:13px;width:197px;overflow:hidden;">Car(Full Size) - Gold GPS product - Plu…</div>
<div class="t" style="left:567px;top:497px;font-size:11px;line-height:13px;width:72px;overflow:hidden;">Flexible Car…</div>
<div class="t" style="left:642px;top:497px;font-size:11px;line-height:13px;width:32px;overflow:hidden;">Tue</div>
<div class="t" style="left:677px;top:497px;font-size:11px;line-height:13px;width:67px;overflow:hidden;">15/08/2017</div>
<div class="t" style="left:747px;top:497px;font-size:11px;line-height:13px;width:37px;overflow:hidden;">19:00</div>
<div class="t" style="left:787px;top:497px;font-size:11px;line-height:13px;width:32px;overflow:hidden;">Tue</div>
<div class="t" style="left:822px;top:497px;font-size:11px;line-height:13px;width:67px;overflow:hidden;">22/08/2017</div>
<div class="t" style="left:892px;top:497px;font-size:11px;line-height:13px;width:37px;overflow:hidden;">17:00</div>
<div class="t" style="left:930px;top:497px;font-size:11px;line-height:13px;width:22px;overflow:hidden;text-align:right;">7</div>
<div class="t" style="left:957px;top:497px;font-size:11px;line-height:13px;width:47px;overflow:hidden;">On Air…</div>
<div class="t" style="left:1007px;top:497px;font-size:11px;line-height:13px;width:47px;overflow:hidden;">On Air…</div>
<div class="t" style="left:1055px;top:497px;font-size:11px;line-height:13px;width:52px;overflow:hidden;text-align:right;">288.83</div>
<div class="t" style="left:1110px;top:497px;font-size:11px;line-height:13px;width:62px;overflow:hidden;text-align:right;">288.83</div>
<div class="t" style="left:1177px;top:497px;font-size:11px;line-height:13px;width:72px;overflow:hidden;">Alamo</div>
<div class="t" style="left:1252px;top:497px;font-size:11px;line-height:13px;width:22px;overflow:hidden;">yes</div>
<div class="t" style="left:1277px;top:497px;font-size:11px;line-height:13px;width:27px;overflow:hidden;">auto</div>
<div class="t" style="left:222px;top:512px;font-size:11px;line-height:13px;width:117px;overflow:hidden;">Chevrolet Impala Or …</div>
<div class="t" style="left:340px;top:512px;font-size:11px;line-height:13px;width:22px;overflow:hidden;text-align:right;">5</div>
<div class="t" style="left:367px;top:512px;font-size:11px;line-height:13px;width:197px;overflow:hidden;">Car(Full Size) - Young Driver Package …</div>
<div class="t" style="left:567px;top:512px;font-size:11px;line-height:13px;width:72px;overflow:hidden;">Flexible Car…</div>
<div class="t" style="left:642px;top:512px;font-size:11px;line-height:13px;width:32px;overflow:hidden;">Tue</div>
<div class="t" style="left:677px;top:512px;font-size:11px;line-height:13px;width:67px;overflow:hidden;">15/08/2017</div>
<div class="t" style="left:747px;top:512px;font-size:11px;line-height:13px;width:37px;overflow:hidden;">19:00</div>
<div class="t" style="left:787px;top:512px;font-size:11px;line-height:13px;width:32px;overflow:hidden;">Tue</div>
<div class="t" style="left:822px;top:512px;font-size:11px;line-height:13px;width:67px;overflow:hidden;">22/08/2017</div>
<div class="t" style="left:892px;top:512px;font-size:11px;line-height:13px;width:37px;overflow:hidden;">17:00</div>
<div class="t" style="left:930px;top:512px;font-size:11px;line-height:13px;width:22px;overflow:hidden;text-align:right;">7</div>
<div class="t" style="left:957px;top:512px;font-size:11px;line-height:13px;width:47px;overflow:hidden;">On Air…</div>
<div class="t" style="left:1007px;top:512px;font-size:11px;line-height:13px;width:47px;overflow:hidden;">On Air…</div>
<div class="t" style="left:1055px;top:512px;font-size:11px;line-height:13px;width:52px;overflow:hidden;text-align:right;">306.11</div>
<div class="t" style="left:1110px;top:512px;font-size:11px;line-height:13px;width:62px;overflow:hidden;text-align:right;">306.11</div>
<div class="t" style="left:1177px;top:512px;font-size:11px;line-height:13px;width:72px;overflow:hidden;">Alamo</div>
<div class="t" style="left:1252px;top:512px;font-size:11px;line-height:13px;width:22px;overflow:hidden;">yes</div>
<div class="t" style="left:1277px;top:512px;font-size:11px;line-height:13px;width:27px;overflow:hidden;">auto</div>
<div class="t" style="left:222px;top:527px;font-size:11px;line-height:13px;width:117px;overflow:hidden;">Chevrolet Tahoe Or …</div>
<div class="t" style="left:340px;top:527px;font-size:11px;line-height:13px;width:22px;overflow:hidden;text-align:right;">7</div>
<div class="t" style="left:367px;top:527px;font-size:11px;line-height:13px;width:197px;overflow:hidden;">SUV(Full Size) - Inclusive product</div>
<div class="t" style="left:567px;top:527px;font-size:11px;line-height:13px;width:72px;overflow:hidden;">Flexible Car…</div>
<div class="t" style="left:642px;top:527px;font-size:11px;line-height:13px;width:32px;overflow:hidden;">Tue</div>
<div class="t" style="left:677px;top:527px;font-size:11px;line-height:13px;width:67px;overflow:hidden;">15/08/2017</div>
<div class="t" style="left:747px;top:527px;font-size:11px;line-height:13px;width:37px;overflow:hidden;">19:00</div>
<div class="t" style="left:787px;top:527px;font-size:11px;line-height:13px;width:32px;overflow:hidden;">Tue</div>
<div class="t" style="left:822px;top:527px;font-size:11px;line-height:13px;width:67px;overflow:hidden;">22/08/2017</div>
<div class="t" style="left:892px;top:527px;font-size:11px;line-height:13px;width:37px;overflow:hidden;">17:00</div>
<div class="t" style="left:930px;top:527px;font-size:11px;line-height:13px;width:22px;overflow:hidden;text-align:right;">7</div>
<div class="t" style="left:957px;top:527px;font-size:11px;line-height:13px;width:47px;overflow:hidden;">On Air…</div>
<div class="t" style="left:1007px;top:527px;font-size:11px;line-height:13px;width:47px;overflow:hidden;">On Air…</div>
<div class="t" style="left:1055px;top:527px;font-size:11px;line-height:13px;width:52px;overflow:hidden;text-align:right;">307.59</div>
<div class="t" style="left:1110px;top:527px;font-size:11px;line-height:13px;width:62px;overflow:hidden;text-align:right;">307.59</div>
<div class="t" style="left:1177px;top:527px;font-size:11px;line-height:13px;width:72px;overflow:hidden;">Alamo</div>
<div class="t" style="left:1252px;top:527px;font-size:11px;line-height:13px;width:22px;overflow:hidden;">yes</div>
<div class="t" style="left:1277px;top:527px;font-size:11px;line-height:13px;width:27px;overflow:hidden;">auto</div>
<div class="t" style="left:222px;top:542px;font-size:11px;line-height:13px;width:117px;overflow:hidden;">Chevrolet Impala Or …</div>
<div class="t" style="left:340px;top:542px;font-size:11px;line-height:13px;width:22px;overflow:hidden;text-align:right;">5</div>
<div class="t" style="left:367px;top:542px;font-size:11px;line-height:13px;width:197px;overflow:hidden;">Car(Full Size) - Young Driver Package …</div>
<div class="t" style="left:567px;top:542px;font-size:11px;line-height:13px;width:72px;overflow:hidden;">Flexible Car…</div>
<div class="t" style="left:642px;top:542px;font-size:11px;line-height:13px;width:32px;overflow:hidden;">Tue</div>
<div class="t" style="left:677px;top:542px;font-size:11px;line-height:13px;width:67px;overflow:hidden;">15/08/2017</div>
<div class="t" style="left:747px;top:542px;font-size:11px;line-height:13px;width:37px;overflow:hidden;">19:00</div>
<div class="t" style="left:787px;top:542px;font-size:11px;line-height:13px;width:32px;overflow:hidden;">Tue</div>
<div class="t" style="left:822px;top:542px;font-size:11px;line-height:13px;width:67px;overflow:hidden;">22/08/2017</div>
<div class="t" style="left:892px;top:542px;font-size:11px;line-height:13px;width:37px;overflow:hidden;">17:00</div>
<div class="t" style="left:930px;top:542px;font-size:11px;line-height:13px;width:22px;overflow:hidden;text-align:right;">7</div>
<div class="t" style="left:957px;top:542px;font-size:11px;line-height:13px;width:47px;overflow:hidden;">On Air…</div>
<div class="t" style="left:1007px;top:542px;font-size:11px;line-height:13px;width:47px;overflow:hidden;">On Air…</div>
<div class="t" style="left:1055px;top:542px;font-size:11px;line-height:13px;width:52px;overflow:hidden;text-align:right;">325.87</div>
<div class="t" style="left:1110px;top:542px;font-size:11px;line-height:13px;width:62px;overflow:hidden;text-align:right;">325.87</div>
<div class="t" style="left:1177px;top:542px;font-size:11px;line-height:13px;width:72px;overflow:hidden;">Alamo</div>
<div class="t" style="left:1252px;top:542px;font-size:11px;line-height:13px;width:22px;overflow:hidden;">yes</div>
<div class="t" style="left:1277px;top:542px;font-size:11px;line-height:13px;width:27px;overflow:hidden;">auto</div>
<div class="t" style="left:222px;top:557px;font-size:11px;line-height:13px;width:117px;overflow:hidden;">Chevrolet Tahoe Or …</div>
<div class="t" style="left:340px;top:557px;font-size:11px;line-height:13px;width:22px;overflow:hidden;text-align:right;">7</div>
<div class="t" style="left:367px;top:557px;font-size:11px;line-height:13px;width:197px;overflow:hidden;">SUV(Full Size) - Inclusive product - Plu…</div>
<div class="t" style="left:567px;top:557px;font-size:11px;line-height:13px;width:72px;overflow:hidden;">Flexible Car…</div>
<div class="t" style="left:642px;top:557px;font-size:11px;line-height:13px;width:32px;overflow:hidden;">Tue</div>
<div class="t" style="left:677px;top:557px;font-size:11px;line-height:13px;width:67px;overflow:hidden;">15/08/2017</div>
<div class="t" style="left:747px;top:557px;font-size:11px;line-height:13px;width:37px;overflow:hidden;">19:00</div>
<div class="t" style="left:787px;top:557px;font-size:11px;line-height:13px;width:32px;overflow:hidden;">Tue</div>
<div class="t" style="left:822px;top:557px;font-size:11px;line-height:13px;width:67px;overflow:hidden;">22/08/2017</div>
<div class="t" style="left:892px;top:557px;font-size:11px;line-height:13px;width:37px;overflow:hidden;">17:00</div>
<div class="t" style="left:930px;top:557px;font-size:11px;line-height:13px;width:22px;overflow:hidden;text-align:right;">7</div>
<div class="t" style="left:957px;top:557px;font-size:11px;line-height:13px;width:47px;overflow:hidden;">On Air…</div>
<div class="t" style="left:1007px;top:557px;font-size:11px;line-height:13px;width:47px;overflow:hidden;">On Air…</div>
<div class="t" style="left:1055px;top:557px;font-size:11px;line-height:13px;width:52px;overflow:hidden;text-align:right;">327.35</div>
<div class="t" style="left:1110px;top:557px;font-size:11px;line-height:13px;width:62px;overflow:hidden;text-align:right;">327.35</div>
<div class="t" style="left:1177px;top:557px;font-size:11px;line-height:13px;width:72px;overflow:hidden;">Alamo</div>
<div class="t" style="left:1252px;top:557px;font-size:11px;line-height:13px;width:22px;overflow:hidden;">yes</div>
<div class="t" style="left:1277px;top:557px;font-size:11px;line-height:13px;width:27px;overflow:hidden;">auto</div>
<div class="t" style="left:222px;top:572px;font-size:11px;line-height:13px;width:117px;overflow:hidden;">Chevrolet Tahoe Or …</div>
<div class="t" style="left:340px;top:572px;font-size:11px;line-height:13px;width:22px;overflow:hidden;text-align:right;">7</div>
<div class="t" style="left:367px;top:572px;font-size:11px;line-height:13px;width:197px;overflow:hidden;">SUV(Full Size) - Gold product</div>
<div class="t" style="left:567px;top:572px;font-size:11px;line-height:13px;width:72px;overflow:hidden;">Flexible Car…</div>
<div class="t" style="left:642px;top:572px;font-size:11px;line-height:13px;width:32px;overflow:hidden;">Tue</div>
<div class="t" style="left:677px;top:572px;font-size:11px;line-height:13px;width:67px;overflow:hidden;">15/08/2017</div>
<div class="t" style="left:747px;top:572px;font-size:11px;line-height:13px;width:37px;overflow:hidden;">19:00</div>
<div class="t" style="left:787px;top:572px;font-size:11px;line-height:13px;width:32px;overflow:hidden;">Tue</div>
<div class="t" style="left:822px;top:572px;font-size:11px;line-height:13px;width:67px;overflow:hidden;">22/08/2017</div>
<div class="t" style="left:892px;top:572px;font-size:11px;line-height:13px;width:37px;overflow:hidden;">17:00</div>
<div class="t" style="left:930px;top:572px;font-size:11px;line-height:13px;width:22px;overflow:hidden;text-align:right;">7</div>
<div class="t" style="left:957px;top:572px;font-size:11px;line-height:13px;width:47px;overflow:hidden;">On Air…</div>
<div class="t" style="left:1007px;top:572px;font-size:11px;line-height:13px;width:47px;overflow:hidden;">On Air…</div>
<div class="t" style="left:1055px;top:572px;font-size:11px;line-height:13px;width:52px;overflow:hidden;text-align:right;">327.59</div>
<div class="t" style="left:1110px;top:572px;font-size:11px;line-height:13px;width:62px;overflow:hidden;text-align:right;">327.59</div>
<div class="t" style="left:1177px;top:572px;font-size:11px;line-height:13px;width:72px;overflow:hidden;">Alamo</div>
<div class="t" style="left:1252px;top:572px;font-size:11px;line-height:13px;width:22px;overflow:hidden;">yes</div>
<div class="t" style="left:1277px;top:572px;font-size:11px;line-height:13px;width:27px;overflow:hidden;">auto</div>
<div class="t" style="left:222px;top:587px;font-size:11px;line-height:13px;width:117px;overflow:hidden;">Chevrolet Tahoe Or …</div>
<div class="t" style="left:340px;top:587px;font-size:11px;line-height:13px;width:22px;overflow:hidden;text-align:right;">7</div>
<div class="t" style="left:367px;top:587px;font-size:11px;line-height:13px;width:197px;overflow:hidden;">SUV(Full Size) - Inclusive GPS product</div>
<div class="t" style="left:567px;top:587px;font-size:11px;line-height:13px;width:72px;overflow:hidden;">Flexible Car…</div>
<div class="t" style="left:642px;top:587px;font-size:11px;line-height:13px;width:32px;overflow:hidden;">Tue</div>
<div class="t" style="left:677px;top:587px;font-size:11px;line-height:13px;width:67px;overflow:hidden;">15/08/2017</div>
<div class="t" style="left:747px;top:587px;font-size:11px;line-height:13px;width:37px;overflow:hidden;">19:00</div>
<div class="t" style="left:787px;top:587px;font-size:11px;line-height:13px;width:32px;overflow:hidden;">Tue</div>
<div class="t" style="left:822px;top:587px;font-size:11px;line-height:13px;width:67px;overflow:hidden;">22/08/2017</div>
<div class="t" style="left:892px;top:587px;font-size:11px;line-height:13px;width:37px;overflow:hidden;">17:00</div>
<div class="t" style="left:930px;top:587px;font-size:11px;line-height:13px;width:22px;overflow:hidden;text-align:right;">7</div>
<div class="t" style="left:957px;top:587px;font-size:11px;line-height:13px;width:47px;overflow:hidden;">On Air…</div>
<div class="t" style="left:1007px;top:587px;font-size:11px;line-height:13px;width:47px;overflow:hidden;">On Air…</div>
<div class="t" style="left:1055px;top:587px;font-size:11px;line-height:13px;width:52px;overflow:hidden;text-align:right;">344.63</div>
<div class="t" style="left:1110px;top:587px;font-size:11px;line-height:13px;width:62px;overflow:hidden;text-align:right;">344.63</div>
<div class="t" style="left:1177px;top:587px;font-size:11px;line-height:13px;width:72px;overflow:hidden;">Alamo</div>
<div class="t" style="left:1252px;top:587px;font-size:11px;line-height:13px;width:22px;overflow:hidden;">yes</div>
<div class="t" style="left:1277px;top:587px;font-size:11px;line-height:13px;width:27px;overflow:hidden;">auto</div>
<div class="t" style="left:222px;top:602px;font-size:11px;line-height:13px;width:117px;overflow:hidden;">Chevrolet Tahoe Or …</div>
<div class="t" style="left:340px;top:602px;font-size:11px;line-height:13px;width:22px;overflow:hidden;text-align:right;">7</div>
<div class="t" style="left:367px;top:602px;font-size:11px;line-height:13px;width:197px;overflow:hidden;">SUV(Full Size) - Gold product - Plus Ex…</div>
<div class="t" style="left:567px;top:602px;font-size:11px;line-height:13px;width:72px;overflow:hidden;">Flexible Car…</div>
<div class="t" style="left:642px;top:602px;font-size:11px;line-height:13px;width:32px;overflow:hidden;">Tue</div>
<div class="t" style="left:677px;top:602px;font-size:11px;line-height:13px;width:67px;overflow:hidden;">15/08/2017</div>
<div class="t" style="left:747px;top:602px;font-size:11px;line-height:13px;width:37px;overflow:hidden;">19:00</div>
<div class="t" style="left:787px;top:602px;font-size:11px;line-height:13px;width:32px;overflow:hidden;">Tue</div>
<div class="t" style="left:822px;top:602px;font-size:11px;line-height:13px;width:67px;overflow:hidden;">22/08/2017</div>
<div class="t" style="left:892px;top:602px;font-size:11px;line-height:13px;width:37px;overflow:hidden;">17:00</div>
<div class="t" style="left:930px;top:602px;font-size:11px;line-height:13px;width:22px;overflow:hidden;text-align:right;">7</div>
<div class="t" style="left:957px;top:602px;font-size:11px;line-height:13px;width:47px;overflow:hidden;">On Air…</div>
<div class="t" style="left:1007px;top:602px;font-size:11px;line-height:13px;width:47px;overflow:hidden;">On Air…</div>
<div class="t" style="left:1055px;top:602px;font-size:11px;line-height:13px;width:52px;overflow:hidden;text-align:right;">347.35</div>
<div class="t" style="left:1110px;top:602px;font-size:11px;line-height:13px;width:62px;overflow:hidden;text-align:right;">347.35</div>
<div class="t" style="left:1177px;top:602px;font-size:11px;line-height:13px;width:72px;overflow:hidden;">Alamo</div>
<div class="t" style="left:1252px;top:602px;font-size:11px;line-height:13px;width:22px;overflow:hidden;">yes</div>
<div class="t" style="left:1277px;top:602px;font-size:11px;line-height:13px;width:27px;overflow:hidden;">auto</div>
<div class="t" style="left:222px;top:617px;font-size:11px;line-height:13px;width:117px;overflow:hidden;">Chevrolet Tahoe Or …</div>
<div class="t" style="left:340px;top:617px;font-size:11px;line-height:13px;width:22px;overflow:hidden;text-align:right;">7</div>
<div class="t" style="left:367px;top:617px;font-size:11px;line-height:13px;width:197px;overflow:hidden;">SUV(Full Size) - Inclusive GPS product …</div>
<div class="t" style="left:567px;top:617px;font-size:11px;line-height:13px;width:72px;overflow:hidden;">Flexible Car…</div>
<div class="t" style="left:642px;top:617px;font-size:11px;line-height:13px;width:32px;overflow:hidden;">Tue</div>
<div class="t" style="left:677px;top:617px;font-size:11px;line-height:13px;width:67px;overflow:hidden;">15/08/2017</div>
<div class="t" style="left:747px;top:617px;font-size:11px;line-height:13px;width:37px;overflow:hidden;">19:00</div>
<div class="t" style="left:787px;top:617px;font-size:11px;line-height:13px;width:32px;overflow:hidden;">Tue</div>
<div class="t" style="left:822px;top:617px;font-size:11px;line-height:13px;width:67px;overflow:hidden;">22/08/2017</div>
<div class="t" style="left:892px;top:617px;font-size:11px;line-height:13px;width:37px;overflow:hidden;">17:00</div>
<div class="t" style="left:930px;top:617px;font-size:11px;line-height:13px;width:22px;overflow:hidden;text-align:right;">7</div>
<div class="t" style="left:957px;top:617px;font-size:11px;line-height:13px;width:47px;overflow:hidden;">On Air…</div>
<div class="t" style="left:1007px;top:617px;font-size:11px;line-height:13px;width:47px;overflow:hidden;">On Air…</div>
<div class="t" style="left:1055px;top:617px;font-size:11px;line-height:13px;width:52px;overflow:hidden;text-align:right;">364.39</div>
<div class="t" style="left:1110px;top:617px;font-size:11px;line-height:13px;width:62px;overflow:hidden;text-align:right;">364.39</div>
<div class="t" style="left:1177px;top:617px;font-size:11px;line-height:13px;width:72px;overflow:hidden;">Alamo</div>
<div class="t" style="left:1252px;top:617px;font-size:11px;line-height:13px;width:22px;overflow:hidden;">yes</div>
<div class="t" style="left:1277px;top:617px;font-size:11px;line-height:13px;width:27px;overflow:hidden;">auto</div>
<div class="t" style="left:222px;top:632px;font-size:11px;line-height:13px;width:117px;overflow:hidden;">Chevrolet Tahoe Or …</div>
<div class="t" style="left:340px;top:632px;font-size:11px;line-height:13px;width:22px;overflow:hidden;text-align:right;">7</div>
<div class="t" style="left:367px;top:632px;font-size:11px;line-height:13px;width:197px;overflow:hidden;">SUV(Full Size) - Gold GPS product</div>
<div class="t" style="left:567px;top:632px;font-size:11px;line-height:13px;width:72px;overflow:hidden;">Flexible Car…</div>
<div class="t" style="left:642px;top:632px;font-size:11px;line-height:13px;width:32px;overflow:hidden;">Tue</div>
<div class="t" style="left:677px;top:632px;font-size:11px;line-height:13px;width:67px;overflow:hidden;">15/08/2017</div>
<div class="t" style="left:747px;top:632px;font-size:11px;line-height:13px;width:37px;overflow:hidden;">19:00</div>
<div class="t" style="left:787px;top:632px;font-size:11px;line-height:13px;width:32px;overflow:hidden;">Tue</div>
<div class="t" style="left:822px;top:632px;font-size:11px;line-height:13px;width:67px;overflow:hidden;">22/08/2017</div>
<div class="t" style="left:892px;top:632px;font-size:11px;line-height:13px;width:37px;overflow:hidden;">17:00</div>
<div class="t" style="left:930px;top:632px;font-size:11px;line-height:13px;width:22px;overflow:hidden;text-align:right;">7</div>
<div class="t" style="left:957px;top:632px;font-size:11px;line-height:13px;width:47px;overflow:hidden;">On Air…</div>
<div class="t" style="left:1007px;top:632px;font-size:11px;line-height:13px;width:47px;overflow:hidden;">On Air…</div>
<div class="t" style="left:1055px;top:632px;font-size:11px;line-height:13px;width:52px;overflow:hidden;text-align:right;">364.63</div>
<div class="t" style="left:1110px;top:632px;font-size:11px;line-height:13px;width:62px;overflow:hidden;text-align:right;">364.63</div>
<div class="t" style="left:1177px;top:632px;font-size:11px;line-height:13px;width:72px;overflow:hidden;">Alamo</div>
<div class="t" style="left:1252px;top:632px;font-size:11px;line-height:13px;width:22px;overflow:hidden;">yes</div>
<div class="t" style="left:1277px;top:632px;font-size:11px;line-height:13px;width:27px;overflow:hidden;">auto</div>
<div class="t" style="left:222px;top:647px;font-size:11px;line-height:13px;width:117px;overflow:hidden;">Chevrolet Tahoe Or …</div>
<div class="t" style="left:340px;top:647px;font-size:11px;line-height:13px;width:22px;overflow:hidden;text-align:right;">7</div>
<div class="t" style="left:367px;top:647px;font-size:11px;line-height:13px;width:197px;overflow:hidden;">SUV(Full Size) - Gold GPS product - Plu…</div>
<div class="t" style="left:567px;top:647px;font-size:11px;line-height:13px;width:72px;overflow:hidden;">Flexible Car…</div>
<div class="t" style="left:642px;top:647px;font-size:11px;line-height:13px;width:32px;overflow:hidden;">Tue</div>
<div class="t" style="left:677px;top:647px;font-size:11px;line-height:13px;width:67px;overflow:hidden;">15/08/2017</div>
<div class="t" style="left:747px;top:647px;font-size:11px;line-height:13px;width:37px;overflow:hidden;">19:00</div>
<div class="t" style="left:787px;top:647px;font-size:11px;line-height:13px;width:32px;overflow:hidden;">Tue</div>
<div class="t" style="left:822px;top:647px;font-size:11px;line-height:13px;width:67px;overflow:hidden;">22/08/2017</div>
<div class="t" style="left:892px;top:647px;font-size:11px;line-height:13px;width:37px;overflow:hidden;">17:00</div>
<div class="t" style="left:930px;top:647px;font-size:11px;line-height:13px;width:22px;overflow:hidden;text-align:right;">7</div>
<div class="t" style="left:957px;top:647px;font-size:11px;line-height:13px;width:47px;overflow:hidden;">On Air…</div>
<div class="t" style="left:1007px;top:647px;font-size:11px;line-height:13px;width:47px;overflow:hidden;">On Air…</div>
<div class="t" style="left:1055px;top:647px;font-size:11px;line-height:13px;width:52px;overflow:hidden;text-align:right;">384.39</div>
<div class="t" style="left:1110px;top:647px;font-size:11px;line-height:13px;width:62px;overflow:hidden;text-align:right;">384.39</div>
<div class="t" style="left:1177px;top:647px;font-size:11px;line-height:13px;width:72px;overflow:hidden;">Alamo</div>
<div class="t" style="left:1252px;top:647px;font-size:11px;line-height:13px;width:22px;overflow:hidden;">yes</div>
<div class="t" style="left:1277px;top:647px;font-size:11px;line-height:13px;width:27px;overflow:hidden;">auto</div>
<div class="t" style="left:222px;top:662px;font-size:11px;line-height:13px;width:117px;overflow:hidden;">Chevrolet Tahoe Or …</div>
<div class="t" style="left:340px;top:662px;font-size:11px;line-height:13px;width:22px;overflow:hidden;text-align:right;">7</div>
<div class="t" style="left:367px;top:662px;font-size:11px;line-height:13px;width:197px;overflow:hidden;">SUV(Full Size) - Young Driver Package…</div>
<div class="t" style="left:567px;top:662px;font-size:11px;line-height:13px;width:72px;overflow:hidden;">Flexible Car…</div>
<div class="t" style="left:642px;top:662px;font-size:11px;line-height:13px;width:32px;overflow:hidden;">Tue</div>
<div class="t" style="left:677px;top:662px;font-size:11px;line-height:13px;width:67px;overflow:hidden;">15/08/2017</div>
<div class="t" style="left:747px;top:662px;font-size:11px;line-height:13px;width:37px;overflow:hidden;">19:00</div>
<div class="t" style="left:787px;top:662px;font-size:11px;line-height:13px;width:32px;overflow:hidden;">Tue</div>
<div class="t" style="left:822px;top:662px;font-size:11px;line-height:13px;width:67px;overflow:hidden;">22/08/2017</div>
<div class="t" style="left:892px;top:662px;font-size:11px;line-height:13px;width:37px;overflow:hidden;">17:00</div>
<div class="t" style="left:930px;top:662px;font-size:11px;line-height:13px;width:22px;overflow:hidden;text-align:right;">7</div>
<div class="t" style="left:957px;top:662px;font-size:11px;line-height:13px;width:47px;overflow:hidden;">On Air…</div>
<div class="t" style="left:1007px;top:662px;font-size:11px;line-height:13px;width:47px;overflow:hidden;">On Air…</div>
<div class="t" style="left:1055px;top:662px;font-size:11px;line-height:13px;width:52px;overflow:hidden;text-align:right;">401.67</div>
<div class="t" style="left:1110px;top:662px;font-size:11px;line-height:13px;width:62px;overflow:hidden;text-align:right;">401.67</div>
<div class="t" style="left:1177px;top:662px;font-size:11px;line-height:13px;width:72px;overflow:hidden;">Alamo</div>
<div class="t" style="left:1252px;top:662px;font-size:11px;line-height:13px;width:22px;overflow:hidden;">yes</div>
<div class="t" style="left:1277px;top:662px;font-size:11px;line-height:13px;width:27px;overflow:hidden;">auto</div>
<div class="t" style="left:222px;top:677px;font-size:11px;line-height:13px;width:117px;overflow:hidden;">Chevrolet Tahoe Or …</div>
<div class="t" style="left:340px;top:677px;font-size:11px;line-height:13px;width:22px;overflow:hidden;text-align:right;">7</div>
<div class="t" style="left:367px;top:677px;font-size:11px;line-height:13px;width:197px;overflow:hidden;">SUV(Full Size) - Young Driver Package…</div>
<div class="t" style="left:567px;top:677px;font-size:11px;line-height:13px;width:72px;overflow:hidden;">Flexible Car…</div>
<div class="t" style="left:642px;top:677px;font-size:11px;line-height:13px;width:32px;overflow:hidden;">Tue</div>
<div class="t" style="left:677px;top:677px;font-size:11px;line-height:13px;width:67px;overflow:hidden;">15/08/2017</div>
<div class="t" style="left:747px;top:677px;font-size:11px;line-height:13px;width:37px;overflow:hidden;">19:00</div>
<div class="t" style="left:787px;top:677px;font-size:11px;line-height:13px;width:32px;overflow:hidden;">Tue</div>
<div class="t" style="left:822px;top:677px;font-size:11px;line-height:13px;width:67px;overflow:hidden;">22/08/2017</div>
<div class="t" style="left:892px;top:677px;font-size:11px;line-height:13px;width:37px;overflow:hidden;">17:00</div>
<div class="t" style="left:930px;top:677px;font-size:11px;line-height:13px;width:22px;overflow:hidden;text-align:right;">7</div>
<div class="t" style="left:957px;top:677px;font-size:11px;line-height:13px;width:47px;overflow:hidden;">On Air…</div>
<div class="t" style="left:1007px;top:677px;font-size:11px;line-height:13px;width:47px;overflow:hidden;">On Air…</div>
<div class="t" style="left:1055px;top:677px;font-size:11px;line-height:13px;width:52px;overflow:hidden;text-align:right;">421.42</div>
<div class="t" style="left:1110px;top:677px;font-size:11px;line-height:13px;width:62px;overflow:hidden;text-align:right;">421.42</div>
<div class="t" style="left:1177px;top:677px;font-size:11px;line-height:13px;width:72px;overflow:hidden;">Alamo</div>
<div class="t" style="left:1252px;top:677px;font-size:11px;line-height:13px;width:22px;overflow:hidden;">yes</div>
<div class="t" style="left:1277px;top:677px;font-size:11px;line-height:13px;width:27px;overflow:hidden;">auto</div>
</div>
<div class="t" style="left:222px;top:783px;font-size:11px;line-height:13px;">First portion: 14.4 sec, total search time: 14.4 sec</div>
<div class="a" style="left:1560px;top:778px;width:23px;height:22px;background:#d4d0c8;border-top:1px solid #fff;border-left:1px solid #fff;border-right:1px solid #404040;border-bottom:1px solid #404040;box-shadow:inset -1px -1px 0 #808080"></div>
<svg class="a" style="left:1566px;top:781px" width="10" height="15" viewBox="0 0 10 15"><circle cx="5" cy="2.2" r="1.8" fill="#1040a0"/><path d="M2.5 5.5 H6.5 V13 H8 V14.5 H2 V13 H3.8 V7 H2.5Z" fill="#1040a0"/></svg>
<div class="a" style="left:215px;top:805px;width:1378px;height:1px;background:#808080"></div>
<div class="a" style="left:215px;top:806px;width:53px;height:17px;background:#d4d0c8;"></div>
<div class="t" style="left:219px;top:808px;font-size:11px;line-height:13px;color:#000;transform:scaleX(0.9335);transform-origin:0 0;">Summary</div>
<div class="a" style="left:268px;top:806px;width:40px;height:17px;background:#d4d0c8;"></div>
<div class="t" style="left:271px;top:808px;font-size:11px;line-height:13px;color:#000;transform:scaleX(0.9446);transform-origin:0 0;">Search</div>
<div class="a" style="left:309px;top:806px;width:83px;height:17px;background:#ccffcc;"></div>
<div class="t" style="left:312px;top:808px;font-size:11px;line-height:13px;color:#000;transform:scaleX(0.9408);transform-origin:0 0;">Acc 2A,2C MCO</div>
<div class="a" style="left:392px;top:806px;width:194px;height:17px;background:#c0c0ff;"></div>
<div class="t" style="left:396px;top:808px;font-size:11px;line-height:13px;color:#000;transform:scaleX(0.9829);transform-origin:0 0;">Acc 2A,2C Key Largo (FL); 15/08/2017</div>
<div class="a" style="left:586px;top:806px;width:195px;height:17px;background:#ccffcc;"></div>
<div class="t" style="left:590px;top:808px;font-size:11px;line-height:13px;color:#000;transform:scaleX(0.9803);transform-origin:0 0;">Acc 2A,2C Key Largo (FL); 15/08/2016</div>
<div class="a" style="left:781px;top:806px;width:71px;height:17px;background:#0a1a8a;border-radius:0 0 3px 3px;"></div>
<div class="t" style="left:784px;top:808px;font-size:11px;line-height:13px;color:#fff;transform:scaleX(0.9550);transform-origin:0 0;">Car MCO MIA</div>
<div class="a" style="left:852px;top:806px;width:96px;height:17px;background:#d4d0c8;"></div>
<div class="t" style="left:856px;top:808px;font-size:11px;line-height:13px;color:#000;transform:scaleX(0.9446);transform-origin:0 0;">Financial Summary</div>
<div class="a" style="left:267px;top:806px;width:1px;height:17px;background:#808080"></div>
<div class="a" style="left:308px;top:806px;width:1px;height:17px;background:#808080"></div>
<div class="a" style="left:948px;top:806px;width:1px;height:17px;background:#808080"></div>
<div class="t" style="left:760px;top:832px;font-size:11px;line-height:13px;transform:scaleX(0.9858);transform-origin:0 0;">User: 415 - Hema Yoganathan</div>
<div class="t" style="left:917px;top:832px;font-size:11px;line-height:13px;transform:scaleX(0.9834);transform-origin:0 0;">Retailer: &#x27;Ocean-Florida&#x27;</div>
<div class="t" style="left:1043px;top:832px;font-size:11px;line-height:13px;transform:scaleX(1.0043);transform-origin:0 0;">Client: none</div>
<div class="t" style="left:1540px;top:832px;font-size:11px;line-height:13px;transform:scaleX(0.9434);transform-origin:0 0;">21:06 GMT</div>
<div class="a" style="left:0px;top:857px;width:1600px;height:1px;background:#fff"></div>
<div class="a" style="left:2px;top:860px;width:52px;height:38px;background:#d4d0c8;border-top:1px solid #fff;border-left:1px solid #fff;border-right:1px solid #404040;border-bottom:1px solid #404040;box-shadow:inset -1px -1px 0 #808080"></div>
<svg class="a" style="left:4px;top:870px" width="17" height="16" viewBox="0 0 17 16"><path d="M2 3 Q5 1 8 3 L7 8 Q4 6 1 8Z" fill="#f04020"/><path d="M9 3 Q12 1 16 3 L15 8 Q12 6 8 8Z" fill="#50c030"/><path d="M1 9 Q4 7 7 9 L6 14 Q3 12 0 14Z" fill="#2080f0"/><path d="M8 9 Q11 7 15 9 L14 14 Q11 12 7 14Z" fill="#f8c020"/></svg>
<div class="t" style="left:21px;top:873px;font-size:11px;line-height:13px;font-weight:bold;transform:scaleX(1.1636);transform-origin:0 0;">Start</div>
<div class="a" style="left:63px;top:860px;width:160px;height:38px;background:#fff;border-top:1px solid #404040;border-left:1px solid #404040;border-right:1px solid #fff;border-bottom:1px solid #fff;box-shadow:inset 1px 1px 0 #808080, 1px 1px 0 #d4d0c8"></div>
<svg class="a" style="left:69px;top:869px" width="28" height="20" viewBox="0 0 28 20"><defs><radialGradient id="og2" cx="0.35" cy="0.3" r="0.75"><stop offset="0" stop-color="#ffe868"/><stop offset="0.35" stop-color="#f8b020"/><stop offset="0.75" stop-color="#d06010"/><stop offset="1" stop-color="#b04010"/></radialGradient></defs><path d="M0 7 Q0 2 3 0.5 L14 2 L28 6 L14 19.5 Z" fill="url(#og2)"/></svg>
<div class="t" style="left:103px;top:873px;font-size:11px;line-height:13px;font-weight:bold;transform:scaleX(1.1103);transform-origin:0 0;">Interactive - Ocea...</div>
<div class="a" style="left:1408px;top:860px;width:190px;height:38px;border-top:1px solid #808080;border-left:1px solid #808080;border-right:1px solid #fff;border-bottom:1px solid #fff"></div>
<svg class="a" style="left:1415px;top:871px" width="16" height="17" viewBox="0 0 16 17"><path d="M1 1 L2 0 L3 1 L4 0 L5 1 L6 0 L7 1 L7.5 8 L0.5 8.5Z" fill="#f08020"/><path d="M1 1 L7 1 L7 4 L1 5Z" fill="#f8b030" opacity="0.8"/><path d="M7 1 L16 1 L15.5 8 L7.5 8Z" fill="#1880c8"/><path d="M0.5 8.5 L7.5 8 L8 15.5 L0 15Z" fill="#30a040"/><path d="M7.5 8 L15.5 8 L15 16 L8 15.5Z" fill="#e02818"/><path d="M11 8 L15.5 8 L15 16 L12 16Z" fill="#f06018" opacity="0.7"/></svg>
<svg class="a" style="left:1439px;top:873px" width="17" height="12" viewBox="0 0 17 12"><rect x="0.5" y="2.5" width="12" height="6" fill="#80d860" stroke="#208020"/><rect x="2" y="4" width="5" height="3" fill="#b0f090" opacity="0.7"/><circle cx="10.5" cy="4.5" r="1.1" fill="#000"/><path d="M4 9.5 H9" stroke="#f0d000" stroke-width="1.6" stroke-dasharray="1 0.6"/><path d="M14 1.5 V10.5 M14 1.5 H16.5 M14 4.5 H15.5 M14 7.5 H15.5" stroke="#000" stroke-width="1.3"/></svg>
<svg class="a" style="left:1463px;top:871px" width="17" height="17" viewBox="0 0 17 17"><rect x="4.5" y="2.5" width="11.5" height="10" rx="1" fill="#fafafa" stroke="#707070"/><rect x="6" y="4" width="8.5" height="7" fill="#b4b4b4"/><rect x="5.5" y="13.5" width="10" height="2.2" fill="#fff" stroke="#707070" stroke-width="0.8"/><path d="M1 0.8 V5.5 H5 V0.8 M3 0.8 V4" stroke="#404040" stroke-width="1" fill="#fff"/><path d="M3 5.5 V16.5" stroke="#202020" stroke-width="1.3"/></svg>
<svg class="a" style="left:1487px;top:872px" width="17" height="16" viewBox="0 0 17 16"><path d="M1 5 H4 L8 1 V14 L4 10 H1Z" fill="#e8e8e8" stroke="#909090"/><circle cx="12" cy="11" r="4.2" fill="#e02020"/><path d="M10 9 L14 13 M14 9 L10 13" stroke="#fff" stroke-width="1.4"/></svg>
<div class="t" style="left:1530px;top:865px;font-size:11px;line-height:13px;transform:scaleX(1.0541);transform-origin:0 0;">21:06</div>
<div class="t" style="left:1517px;top:881px;font-size:11px;line-height:13px;transform:scaleX(1.0162);transform-origin:0 0;">18/05/2016</div>
<svg class="a" style="left:1580px;top:873px" width="16" height="13" viewBox="0 0 16 13"><rect x="0" y="0" width="15" height="11" fill="#1868d8"/><rect x="0" y="8" width="15" height="3" fill="#202020"/><circle cx="2" cy="9.5" r="1.2" fill="#f04020"/></svg>
</body></html>
